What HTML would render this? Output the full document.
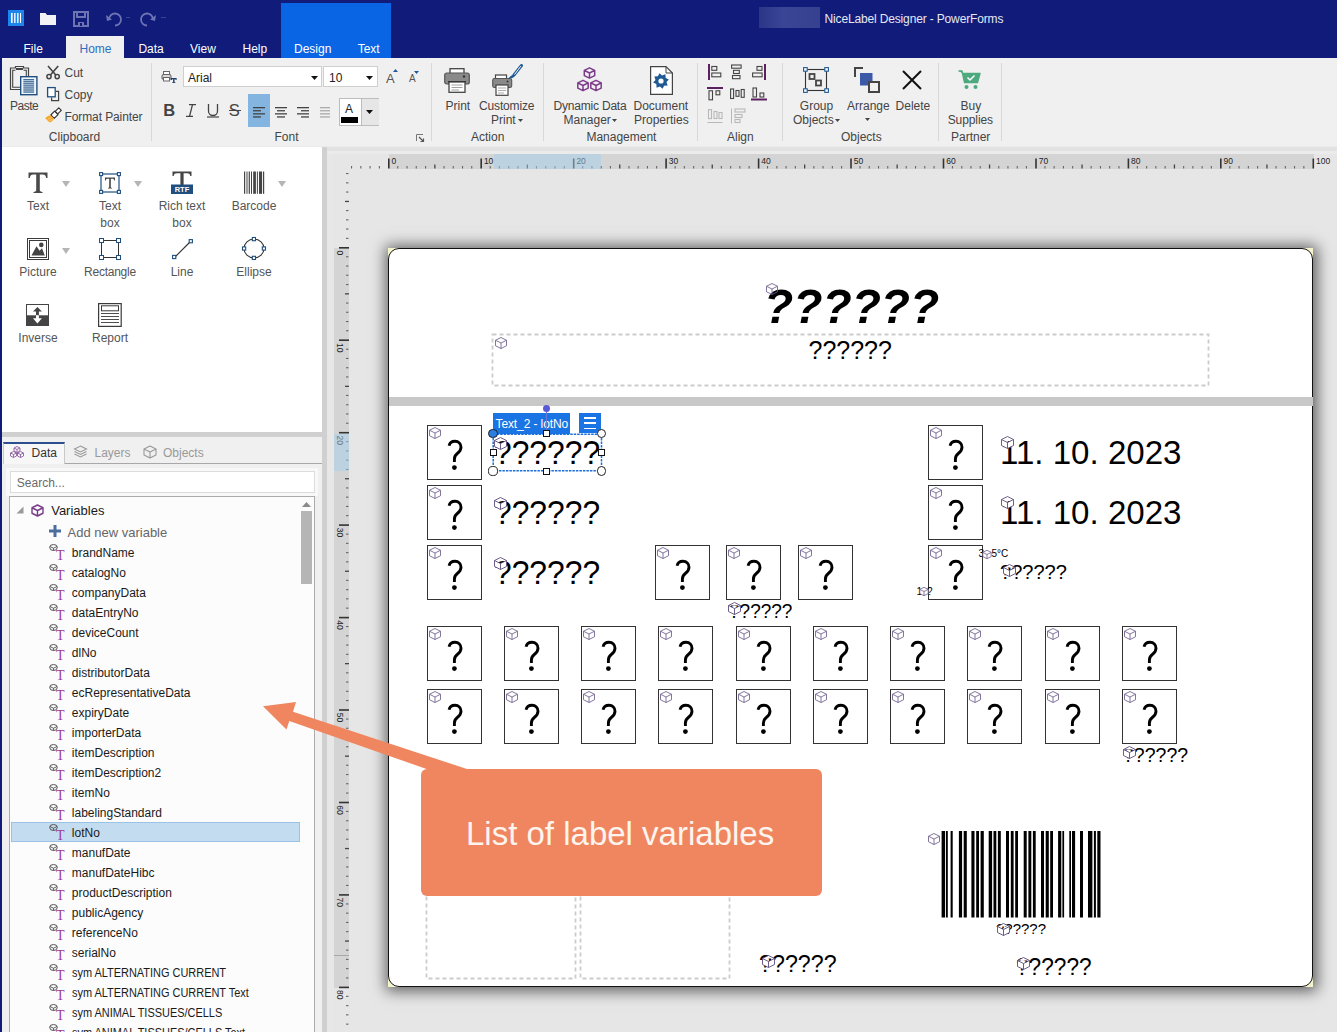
<!DOCTYPE html><html><head><meta charset="utf-8"><style>
html,body{margin:0;padding:0;width:1337px;height:1032px;overflow:hidden;background:#e6e6e6;font-family:"Liberation Sans",sans-serif;}
#root{position:relative;width:1337px;height:1032px;overflow:hidden;}
.t{position:absolute;white-space:nowrap;line-height:1;}
svg{overflow:visible}
</style></head><body><div id="root">
<div style="position:absolute;left:0px;top:0px;width:1337px;height:58px;background:#101b7a"></div>
<div style="position:absolute;left:281px;top:3px;width:110px;height:55px;background:#0a65e4"></div>
<svg style="position:absolute;left:8px;top:10px;" width="16" height="16" viewBox="0 0 16 16"><rect width="16" height="16" fill="#1c86ec"/><rect x="3" y="3" width="1.6" height="10" fill="#fff"/><rect x="6" y="3" width="1.6" height="10" fill="#dfeaff"/><rect x="9" y="3" width="1.6" height="10" fill="#dfeaff"/><rect x="12" y="3" width="1" height="10" fill="#fff"/></svg>
<svg style="position:absolute;left:40px;top:13px;" width="16" height="12" viewBox="0 0 16 12"><path d="M0 0 H5.5 L7 2 H16 V12 H0 Z" fill="#f2f2f6"/></svg>
<svg style="position:absolute;left:73px;top:11px;" width="16" height="16" viewBox="0 0 16 16"><path d="M1 1 H15 V15 H1 Z" fill="none" stroke="#6d74b4" stroke-width="2"/><rect x="4" y="1" width="8" height="5" fill="none" stroke="#6d74b4" stroke-width="2"/><rect x="5" y="11" width="6" height="4" fill="#6d74b4"/><rect x="7" y="12" width="2" height="3" fill="#101b7a"/></svg>
<svg style="position:absolute;left:106px;top:13px;" width="16" height="13" viewBox="0 0 16 13"><path d="M3 6 A6 6 0 1 1 9 12.5" fill="none" stroke="#6d74b4" stroke-width="1.8"/><path d="M0 2 L1 8 L6 6.5 Z" fill="#6d74b4"/></svg>
<div style="position:absolute;left:126px;top:17px;width:4px;height:1px;background:#3a4390"></div>
<svg style="position:absolute;left:140px;top:13px;" width="16" height="13" viewBox="0 0 16 13"><path d="M13 6 A6 6 0 1 0 7 12.5" fill="none" stroke="#6d74b4" stroke-width="1.8"/><path d="M16 2 L15 8 L10 6.5 Z" fill="#6d74b4"/></svg>
<div style="position:absolute;left:161px;top:17px;width:5px;height:1px;background:#3a4390"></div>
<div style="position:absolute;left:759px;top:7px;width:61px;height:21px;background:linear-gradient(90deg,#2b3688,#3a4596 40%,#36418f);"></div>
<div class="t" style="left:824.5px;top:13.1px;font-size:12px;color:#e6e8f4;letter-spacing:-0.15px">NiceLabel Designer - PowerForms</div>
<div style="position:absolute;left:66px;top:36px;width:58px;height:22px;background:#f0f0f0"></div>
<div class="t" style="left:23.5px;top:43.2px;font-size:12px;color:#ffffff;">File</div>
<div class="t" style="left:79.5px;top:43.2px;font-size:12px;color:#2f6fbd;">Home</div>
<div class="t" style="left:138.4px;top:43.2px;font-size:12px;color:#ffffff;">Data</div>
<div class="t" style="left:190.0px;top:43.2px;font-size:12px;color:#ffffff;">View</div>
<div class="t" style="left:242.5px;top:43.2px;font-size:12px;color:#ffffff;">Help</div>
<div class="t" style="left:294.0px;top:43.2px;font-size:12px;color:#ffffff;">Design</div>
<div class="t" style="left:357.7px;top:43.2px;font-size:12px;color:#ffffff;">Text</div>
<div style="position:absolute;left:0px;top:58px;width:1337px;height:89px;background:#f0f0f0"></div>
<div style="position:absolute;left:0px;top:146px;width:1337px;height:1px;background:#ebebeb"></div>
<div style="position:absolute;left:0px;top:58px;width:2px;height:974px;background:#101b7a"></div>
<div style="position:absolute;left:151px;top:63px;width:1px;height:78px;background:#d8d8d8"></div>
<div style="position:absolute;left:431px;top:63px;width:1px;height:78px;background:#d8d8d8"></div>
<div style="position:absolute;left:543px;top:63px;width:1px;height:78px;background:#d8d8d8"></div>
<div style="position:absolute;left:697px;top:63px;width:1px;height:78px;background:#d8d8d8"></div>
<div style="position:absolute;left:782px;top:63px;width:1px;height:78px;background:#d8d8d8"></div>
<div style="position:absolute;left:938px;top:63px;width:1px;height:78px;background:#d8d8d8"></div>
<div style="position:absolute;left:1001px;top:63px;width:1px;height:78px;background:#d8d8d8"></div>
<svg style="position:absolute;left:9px;top:65px;" width="29" height="31" viewBox="0 0 29 31"><path d="M11 24.5 H1.5 V3 H6.5 V1.5 H14.5 V3 H19.5 V11" stroke="#444" stroke-width="1.2" fill="none"/>
<path d="M11 22.3 H3.7 V5.2 H6.5 M14.5 5.2 H17.3 V11" stroke="#444" stroke-width="1.1" fill="none"/>
<rect x="7" y="3" width="7" height="2" fill="#444"/>
<rect x="11.7" y="11.7" width="16.2" height="18" fill="#eef5fb" stroke="#1f4f80" stroke-width="1.4"/><rect x="14.3" y="14.20" width="10.8" height="1.1" fill="#1f4f80"/><rect x="14.3" y="16.25" width="10.8" height="1.1" fill="#1f4f80"/><rect x="14.3" y="18.30" width="10.8" height="1.1" fill="#1f4f80"/><rect x="14.3" y="20.35" width="10.8" height="1.1" fill="#1f4f80"/><rect x="14.3" y="22.40" width="10.8" height="1.1" fill="#1f4f80"/><rect x="14.3" y="24.45" width="10.8" height="1.1" fill="#1f4f80"/><rect x="14.3" y="26.50" width="10.8" height="1.1" fill="#1f4f80"/></svg>
<div class="t" style="left:10.0px;top:99.8px;font-size:12px;color:#444;letter-spacing:-0.5px">Paste</div>
<svg style="position:absolute;left:46px;top:65px;" width="14" height="15" viewBox="0 0 14 15"><path d="M2 1 L9.8 10 M12.2 1 L4.4 10" stroke="#444" stroke-width="1.6"/><circle cx="3" cy="11.6" r="2.1" fill="none" stroke="#444" stroke-width="1.5"/><circle cx="11.2" cy="11.6" r="2.1" fill="none" stroke="#444" stroke-width="1.5"/></svg>
<div class="t" style="left:64.5px;top:66.8px;font-size:12px;color:#444;">Cut</div>
<svg style="position:absolute;left:46px;top:86px;" width="14" height="16" viewBox="0 0 14 16"><rect x="1.6" y="1.6" width="7.6" height="9.2" fill="#fff" stroke="#1f4f80" stroke-width="1.3"/><path d="M10 5.4 H12.6 V14.6 H5.6 V11.5" fill="none" stroke="#444" stroke-width="1.2"/></svg>
<div class="t" style="left:64.5px;top:89.3px;font-size:12px;color:#444;">Copy</div>
<svg style="position:absolute;left:45px;top:107px;" width="17" height="16" viewBox="0 0 17 16"><path d="M13.8 0.8 L16.3 3.3 L12.7 6.9 L10.2 4.4 Z" fill="#fff" stroke="#333" stroke-width="1.2" stroke-linejoin="round"/><path d="M9.6 4.2 L13 7.6 L9.2 11.4 L5.8 8 Z" fill="#fff" stroke="#333" stroke-width="1.2" stroke-linejoin="round"/><path d="M5.6 8.2 L9 11.6 C8 13.8 6.6 15 4.6 15.6 L0.4 11.4 C1 9.8 3 8.6 5.6 8.2 Z" fill="#f5a52a"/><path d="M2.6 12.2 L6.5 10.6 M3.8 14.2 L7.6 12" stroke="#ffd79a" stroke-width="0.7"/></svg>
<div class="t" style="left:64.5px;top:111.0px;font-size:12px;color:#444;letter-spacing:-0.1px">Format Painter</div>
<div class="t" style="left:48.8px;top:130.8px;font-size:12px;color:#444;">Clipboard</div>
<svg style="position:absolute;left:161px;top:70px;" width="17" height="14" viewBox="0 0 17 14"><rect x="2.5" y="1.5" width="6" height="4" fill="#fff" stroke="#666" stroke-width="1"/><rect x="1" y="4.5" width="9" height="5" rx="1.8" fill="#d8d8d8" stroke="#666" stroke-width="1.1"/><rect x="2.5" y="7.5" width="6" height="3.5" fill="#fff" stroke="#666" stroke-width="1"/><path d="M10 8 H15.6 V10 H14.7 L14.5 9.3 H13.5 V12.2 H14.4 V13 H11.2 V12.2 H12.1 V9.3 H11.1 L10.9 10 H10 Z" fill="#1f3f6f"/></svg>
<div style="position:absolute;left:183px;top:66px;width:139px;height:21px;background:#fff;box-sizing:border-box;border:1px solid #cfcfcf"></div>
<div class="t" style="left:188.0px;top:71.8px;font-size:12px;color:#222;">Arial</div>
<svg style="position:absolute;left:311px;top:76px;" width="7" height="4" viewBox="0 0 7 4"><path d="M0 0 H7 L3.5 4 Z" fill="#111"/></svg>
<div style="position:absolute;left:323px;top:66px;width:55px;height:21px;background:#fff;box-sizing:border-box;border:1px solid #cfcfcf"></div>
<div class="t" style="left:329.0px;top:71.8px;font-size:12px;color:#222;">10</div>
<svg style="position:absolute;left:366px;top:76px;" width="7" height="4" viewBox="0 0 7 4"><path d="M0 0 H7 L3.5 4 Z" fill="#111"/></svg>
<div class="t" style="left:386.0px;top:71.5px;font-size:13px;color:#555;">A</div>
<svg style="position:absolute;left:393px;top:69px;" width="5" height="3" viewBox="0 0 5 3"><path d="M0 3 L2.5 0 L5 3 Z" fill="#1f5aa0"/></svg>
<div class="t" style="left:409.0px;top:73.5px;font-size:10px;color:#555;">A</div>
<svg style="position:absolute;left:414px;top:70.5px;" width="5" height="3" viewBox="0 0 5 3"><path d="M0 0 L2.5 3 L5 0 Z" fill="#1f5aa0"/></svg>
<div class="t" style="left:163.2px;top:102.3px;font-size:16.5px;color:#444;font-weight:bold">B</div>
<svg style="position:absolute;left:186px;top:104px;" width="10" height="13" viewBox="0 0 10 13"><path d="M3 0.7 H10 M0 12.3 H7 M6.5 0.7 L3.5 12.3" stroke="#444" stroke-width="1.3" fill="none"/></svg>
<svg style="position:absolute;left:207px;top:104px;" width="12" height="14" viewBox="0 0 12 14"><path d="M1.5 0 V7 A4.5 4.5 0 0 0 10.5 7 V0" stroke="#444" stroke-width="1.3" fill="none"/><path d="M0 13 H12" stroke="#444" stroke-width="1.2"/></svg>
<div class="t" style="left:228.8px;top:102.3px;font-size:16.5px;color:#444;">S</div>
<div style="position:absolute;left:228.5px;top:109.5px;width:12px;height:1.2px;background:#444"></div>
<div style="position:absolute;left:248px;top:94px;width:22px;height:33px;background:#84b4e0"></div>
<svg style="position:absolute;left:253px;top:107px;" width="12" height="10" viewBox="0 0 12 10"><rect x="0" y="0.0" width="12" height="1.3" fill="#444"/><rect x="0" y="3.1" width="8" height="1.3" fill="#444"/><rect x="0" y="6.2" width="12" height="1.3" fill="#444"/><rect x="0" y="9.3" width="8" height="1.3" fill="#444"/></svg>
<svg style="position:absolute;left:275px;top:107px;" width="12" height="10" viewBox="0 0 12 10"><rect x="0" y="0.0" width="12" height="1.3" fill="#444"/><rect x="2" y="3.1" width="8" height="1.3" fill="#444"/><rect x="0" y="6.2" width="12" height="1.3" fill="#444"/><rect x="2" y="9.3" width="8" height="1.3" fill="#444"/></svg>
<svg style="position:absolute;left:297px;top:107px;" width="12" height="10" viewBox="0 0 12 10"><rect x="0" y="0.0" width="12" height="1.3" fill="#444"/><rect x="4" y="3.1" width="8" height="1.3" fill="#444"/><rect x="0" y="6.2" width="12" height="1.3" fill="#444"/><rect x="4" y="9.3" width="8" height="1.3" fill="#444"/></svg>
<svg style="position:absolute;left:320px;top:107px;" width="12" height="10" viewBox="0 0 12 10"><rect x="0" y="0.0" width="10" height="1.3" fill="#aaa"/><rect x="0" y="3.1" width="10" height="1.3" fill="#aaa"/><rect x="0" y="6.2" width="10" height="1.3" fill="#aaa"/><rect x="0" y="9.3" width="10" height="1.3" fill="#aaa"/></svg>
<div style="position:absolute;left:339px;top:98px;width:40px;height:28px;background:#fff;box-sizing:border-box;border:1px solid #bdbdbd"></div>
<div style="position:absolute;left:361px;top:99px;width:17px;height:26px;background:#e6e6e6;border-left:1px solid #bdbdbd"></div>
<div class="t" style="left:345.0px;top:102.8px;font-size:12px;color:#222;">A</div>
<div style="position:absolute;left:341px;top:117px;width:17px;height:6px;background:#000"></div>
<svg style="position:absolute;left:366px;top:110px;" width="7" height="4" viewBox="0 0 7 4"><path d="M0 0 H7 L3.5 4 Z" fill="#111"/></svg>
<div class="t" style="left:274.5px;top:130.8px;font-size:12px;color:#444;">Font</div>
<svg style="position:absolute;left:416px;top:134px;" width="8" height="8" viewBox="0 0 8 8"><path d="M0.5 7 V0.5 H7" fill="none" stroke="#777" stroke-width="1"/><path d="M3 3 L7.5 7.5 M4.5 7.5 H7.5 V4.5" fill="none" stroke="#555" stroke-width="1.2"/></svg>
<svg style="position:absolute;left:444px;top:68px;" width="26" height="25" viewBox="0 0 26 25"><rect x="6" y="0.7" width="14" height="5" fill="#fff" stroke="#444" stroke-width="1.3"/>
<rect x="0.7" y="5" width="24.6" height="11" rx="2" fill="#8a8a8a" stroke="#555" stroke-width="1.2"/>
<circle cx="20" cy="8.5" r="1.2" fill="#333"/><rect x="4" y="13" width="18" height="1.3" fill="#222"/>
<rect x="5" y="14" width="16" height="10.3" fill="#fff" stroke="#444" stroke-width="1.3"/>
<path d="M7.5 17 H18.5 M7.5 19.5 H18.5 M7.5 22 H15" stroke="#888" stroke-width="0.8"/></svg>
<div class="t" style="left:445.5px;top:99.8px;font-size:12px;color:#444;">Print</div>
<svg style="position:absolute;left:492px;top:64px;" width="31" height="32" viewBox="0 0 31 32"><rect x="3.5" y="11" width="11" height="4" fill="#fff" stroke="#444" stroke-width="1.2"/>
<rect x="0.7" y="14.5" width="19" height="9" rx="1.8" fill="#8a8a8a" stroke="#555" stroke-width="1.1"/>
<circle cx="15.5" cy="17.5" r="1" fill="#333"/>
<rect x="4" y="21" width="12" height="10.3" fill="#fff" stroke="#444" stroke-width="1.2"/>
<path d="M6 24 H14 M6 26.5 H14 M6 29 H12" stroke="#888" stroke-width="0.7"/>
<path d="M29.5 1.5 L22 11" stroke="#1f5a96" stroke-width="3" stroke-linecap="round" fill="none"/><path d="M28.8 2.2 L22.5 10.5" stroke="#fff" stroke-width="1" />
<path d="M21.5 10.5 C19 11 18 13 16 14.5 C19.5 15 22.5 13.5 22.5 11.5 Z" fill="#1f5a96"/></svg>
<div class="t" style="left:479.0px;top:99.8px;font-size:12px;color:#444;letter-spacing:-0.15px">Customize</div>
<div class="t" style="left:491.0px;top:113.8px;font-size:12px;color:#444;">Print</div>
<svg style="position:absolute;left:518px;top:119px;" width="5" height="3" viewBox="0 0 5 3"><path d="M0 0 H5 L2.5 3 Z" fill="#444"/></svg>
<div class="t" style="left:471.0px;top:130.8px;font-size:12px;color:#444;">Action</div>
<svg style="position:absolute;left:576px;top:67px;" width="27" height="27" viewBox="0 0 27 27"><path d="M13.5 0.7999999999999998 L18.7 3.4 V8.6 L13.5 11.2 L8.3 8.6 V3.4 Z M8.3 3.4 L13.5 6 L18.7 3.4 M13.5 6 V11.2" fill="none" stroke="#7d3a8a" stroke-width="1.5" stroke-linejoin="round"/><path d="M7 13.3 L12.2 15.9 V21.1 L7 23.7 L1.7999999999999998 21.1 V15.9 Z M1.7999999999999998 15.9 L7 18.5 L12.2 15.9 M7 18.5 V23.7" fill="none" stroke="#7d3a8a" stroke-width="1.5" stroke-linejoin="round"/><path d="M20 13.3 L25.2 15.9 V21.1 L20 23.7 L14.8 21.1 V15.9 Z M14.8 15.9 L20 18.5 L25.2 15.9 M20 18.5 V23.7" fill="none" stroke="#7d3a8a" stroke-width="1.5" stroke-linejoin="round"/></svg>
<div class="t" style="left:553.5px;top:99.8px;font-size:12px;color:#444;letter-spacing:-0.2px">Dynamic Data</div>
<div class="t" style="left:563.5px;top:113.8px;font-size:12px;color:#444;">Manager</div>
<svg style="position:absolute;left:612px;top:119px;" width="5" height="3" viewBox="0 0 5 3"><path d="M0 0 H5 L2.5 3 Z" fill="#444"/></svg>
<svg style="position:absolute;left:650px;top:66px;" width="23" height="29" viewBox="0 0 23 29"><path d="M0.6 0.6 H16 L22.4 7 V28.4 H0.6 Z" fill="#fff" stroke="#444" stroke-width="1.2"/><path d="M16 0.6 V7 H22.4" fill="none" stroke="#444" stroke-width="1"/>
<polygon points="18.85,13.44 16.49,16.09 17.65,19.44 14.11,19.66 12.56,22.85 9.91,20.49 6.56,21.65 6.34,18.11 3.15,16.56 5.51,13.91 4.35,10.56 7.89,10.34 9.44,7.15 12.09,9.51 15.44,8.35 15.66,11.89" fill="#1f5a96"/><circle cx="11" cy="15" r="2.6" fill="#fff"/></svg>
<div class="t" style="left:633.5px;top:99.8px;font-size:12px;color:#444;">Document</div>
<div class="t" style="left:634.0px;top:113.8px;font-size:12px;color:#444;">Properties</div>
<div class="t" style="left:586.4px;top:130.8px;font-size:12px;color:#444;">Management</div>
<svg style="position:absolute;left:708px;top:64px;" width="16" height="16" viewBox="0 0 16 16"><rect x="0" y="0" width="2" height="16" fill="#5a2060"/><rect x="3.8" y="2.5" width="5" height="3.8" fill="none" stroke="#444" stroke-width="1.1"/><rect x="3.8" y="9" width="9" height="3.8" fill="none" stroke="#444" stroke-width="1.1"/></svg>
<svg style="position:absolute;left:731px;top:64px;" width="16" height="16" viewBox="0 0 16 16"><rect x="0.6" y="1" width="9.5" height="3.2" fill="none" stroke="#444" stroke-width="1.1"/><rect x="2.5" y="6.3" width="5.8" height="3.2" fill="none" stroke="#444" stroke-width="1.1"/><rect x="1.5" y="11.5" width="7.5" height="3.2" fill="none" stroke="#444" stroke-width="1.1"/></svg>
<svg style="position:absolute;left:752px;top:64px;" width="16" height="16" viewBox="0 0 16 16"><rect x="12" y="0" width="2" height="16" fill="#5a2060"/><rect x="5" y="2.5" width="5" height="3.8" fill="none" stroke="#444" stroke-width="1.1"/><rect x="0.6" y="9" width="9.5" height="3.8" fill="none" stroke="#444" stroke-width="1.1"/></svg>
<svg style="position:absolute;left:707px;top:87px;" width="16" height="16" viewBox="0 0 16 16"><rect x="0" y="0" width="16" height="2" fill="#5a2060"/><rect x="2" y="3.8" width="3.5" height="9" fill="none" stroke="#444" stroke-width="1.1"/><rect x="9" y="3.8" width="3.8" height="4" fill="none" stroke="#444" stroke-width="1.1"/></svg>
<svg style="position:absolute;left:730px;top:88px;" width="16" height="16" viewBox="0 0 16 16"><rect x="0.6" y="1" width="3" height="9.5" fill="none" stroke="#444" stroke-width="1.1"/><rect x="6" y="2.5" width="3" height="5.8" fill="none" stroke="#444" stroke-width="1.1"/><rect x="11.2" y="1.5" width="3" height="7.8" fill="none" stroke="#444" stroke-width="1.1"/></svg>
<svg style="position:absolute;left:751px;top:87px;" width="16" height="16" viewBox="0 0 16 16"><rect x="2" y="1" width="3.5" height="9" fill="none" stroke="#444" stroke-width="1.1"/><rect x="9" y="6" width="3.8" height="4" fill="none" stroke="#444" stroke-width="1.1"/><rect x="0" y="11.5" width="16" height="2" fill="#5a2060"/></svg>
<svg style="position:absolute;left:707px;top:109px;" width="16" height="16" viewBox="0 0 16 16"><rect x="1.5" y="0.6" width="3" height="9" fill="none" stroke="#b8b8b8" stroke-width="1.1"/><rect x="7" y="2.5" width="3" height="7" fill="none" stroke="#b8b8b8" stroke-width="1.1"/><rect x="12" y="3.5" width="3" height="6" fill="none" stroke="#b8b8b8" stroke-width="1.1"/><path d="M0.5 13.5 H15.5" stroke="#b8b8b8" stroke-width="1"/></svg>
<svg style="position:absolute;left:730px;top:108px;" width="16" height="16" viewBox="0 0 16 16"><path d="M1.5 0.5 V15.5" stroke="#b8b8b8" stroke-width="1"/><rect x="5" y="1" width="10" height="3" fill="none" stroke="#b8b8b8" stroke-width="1.1"/><rect x="5" y="6.5" width="7" height="3" fill="none" stroke="#b8b8b8" stroke-width="1.1"/><rect x="5" y="11.5" width="5" height="3" fill="none" stroke="#b8b8b8" stroke-width="1.1"/></svg>
<div class="t" style="left:727.0px;top:130.8px;font-size:12px;color:#444;">Align</div>
<svg style="position:absolute;left:803px;top:67px;" width="26" height="26" viewBox="0 0 26 26"><rect x="2.5" y="2.5" width="21" height="21" fill="none" stroke="#333" stroke-width="1.1"/>
<rect x="6.5" y="7" width="5" height="5" fill="none" stroke="#444" stroke-width="1.8"/><rect x="13" y="13.5" width="5" height="5" fill="none" stroke="#444" stroke-width="1.8"/>
<rect x="0.6" y="0.6" width="3.6" height="3.6" fill="#fff" stroke="#1f5a96" stroke-width="1.1"/><rect x="21.8" y="0.6" width="3.6" height="3.6" fill="#fff" stroke="#1f5a96" stroke-width="1.1"/>
<rect x="0.6" y="21.8" width="3.6" height="3.6" fill="#fff" stroke="#1f5a96" stroke-width="1.1"/><rect x="21.8" y="21.8" width="3.6" height="3.6" fill="#fff" stroke="#1f5a96" stroke-width="1.1"/></svg>
<div class="t" style="left:799.8px;top:99.8px;font-size:12px;color:#444;">Group</div>
<div class="t" style="left:793.0px;top:113.8px;font-size:12px;color:#444;">Objects</div>
<svg style="position:absolute;left:835px;top:119px;" width="5" height="3" viewBox="0 0 5 3"><path d="M0 0 H5 L2.5 3 Z" fill="#444"/></svg>
<svg style="position:absolute;left:854px;top:67px;" width="26" height="26" viewBox="0 0 26 26"><path d="M1 10 V1 H9" fill="none" stroke="#444" stroke-width="2"/>
<rect x="6" y="6" width="12.5" height="12.5" fill="#3a5aa8"/>
<rect x="15" y="15" width="10" height="10" fill="#f0f0f0" stroke="#444" stroke-width="2"/></svg>
<div class="t" style="left:847.0px;top:99.8px;font-size:12px;color:#444;">Arrange</div>
<svg style="position:absolute;left:865px;top:118px;" width="5" height="3" viewBox="0 0 5 3"><path d="M0 0 H5 L2.5 3 Z" fill="#444"/></svg>
<svg style="position:absolute;left:902px;top:69.5px;" width="20" height="20" viewBox="0 0 20 20"><path d="M1 1 L19 19 M19 1 L1 19" stroke="#111" stroke-width="2"/></svg>
<div class="t" style="left:895.6px;top:99.8px;font-size:12px;color:#444;">Delete</div>
<div class="t" style="left:841.0px;top:130.8px;font-size:12px;color:#444;">Objects</div>
<svg style="position:absolute;left:958px;top:70px;" width="23" height="20" viewBox="0 0 23 20"><path d="M0.5 1 H4 L6.5 12.5 H19.5 L22 3.5 H5" fill="#4eaa7e" stroke="#4eaa7e" stroke-width="1.4" stroke-linejoin="round"/>
<path d="M9.5 7.5 L12 10 L16.5 5.5" fill="none" stroke="#fff" stroke-width="1.5"/>
<circle cx="8.5" cy="17" r="2" fill="#4eaa7e"/><circle cx="17.5" cy="17" r="2" fill="#4eaa7e"/></svg>
<div class="t" style="left:960.6px;top:99.8px;font-size:12px;color:#444;">Buy</div>
<div class="t" style="left:947.7px;top:113.8px;font-size:12px;color:#444;letter-spacing:-0.1px">Supplies</div>
<div class="t" style="left:951.0px;top:130.8px;font-size:12px;color:#444;">Partner</div>
<div style="position:absolute;left:2px;top:147px;width:320px;height:285px;background:#ffffff"></div>
<div style="position:absolute;left:322px;top:147px;width:5px;height:885px;background:#d0d0d0"></div>
<svg style="position:absolute;left:28px;top:172px;" width="20" height="21" viewBox="0 0 20 21"><path d="M0.5 0.5 H19.5 V6 H18.2 C17.8 3.5 17 2.5 14.5 2.5 H11.8 V18 C11.8 19.3 12.5 19.7 14.5 19.9 V21 H5.5 V19.9 C7.5 19.7 8.2 19.3 8.2 18 V2.5 H5.5 C3 2.5 2.2 3.5 1.8 6 H0.5 Z" fill="#4a4a4a"/></svg>
<svg style="position:absolute;left:62px;top:181px;" width="8" height="6" viewBox="0 0 8 6"><path d="M0 0 H8 L4 6 Z" fill="#b5b5b5"/></svg>
<div class="t" style="left:-112.0px;width:300px;text-align:center;top:200.2px;font-size:12px;color:#555;">Text</div>
<svg style="position:absolute;left:99px;top:172px;" width="22" height="22" viewBox="0 0 22 22"><rect x="2" y="2" width="18" height="18" fill="none" stroke="#1f4f7f" stroke-width="1.2"/>
<rect x="0.6" y="0.6" width="3" height="3" fill="#fff" stroke="#1f4f7f" stroke-width="1.1"/><rect x="18.4" y="0.6" width="3" height="3" fill="#fff" stroke="#1f4f7f" stroke-width="1.1"/>
<rect x="0.6" y="18.4" width="3" height="3" fill="#fff" stroke="#1f4f7f" stroke-width="1.1"/><rect x="18.4" y="18.4" width="3" height="3" fill="#fff" stroke="#1f4f7f" stroke-width="1.1"/>
<path d="M6 5.5 H16 V8.5 H15.3 C15 7 14.5 6.7 13 6.7 H11.8 V15 C11.8 15.6 12.2 15.8 13 15.9 V16.5 H9 V15.9 C9.8 15.8 10.2 15.6 10.2 15 V6.7 H9 C7.5 6.7 7 7 6.7 8.5 H6 Z" fill="#444"/></svg>
<svg style="position:absolute;left:134px;top:181px;" width="8" height="6" viewBox="0 0 8 6"><path d="M0 0 H8 L4 6 Z" fill="#b5b5b5"/></svg>
<div class="t" style="left:-40.0px;width:300px;text-align:center;top:200.2px;font-size:12px;color:#555;">Text</div>
<div class="t" style="left:-40.0px;width:300px;text-align:center;top:217.0px;font-size:12px;color:#555;">box</div>
<svg style="position:absolute;left:171px;top:171px;" width="22" height="23" viewBox="0 0 22 23"><path d="M1.5 0.5 H20.5 V5 H19.3 C19 3 18 2.3 16 2.3 H12.6 V14 H9.4 V2.3 H6 C4 2.3 3 3 2.7 5 H1.5 Z" fill="#444"/>
<rect x="0" y="13.5" width="22" height="9.5" fill="#1f4f7f"/>
<text x="11" y="21.3" text-anchor="middle" font-family="Liberation Sans" font-weight="bold" font-size="7.5" fill="#fff">RTF</text></svg>
<div class="t" style="left:32.0px;width:300px;text-align:center;top:200.2px;font-size:12px;color:#555;">Rich text</div>
<div class="t" style="left:32.0px;width:300px;text-align:center;top:217.0px;font-size:12px;color:#555;">box</div>
<svg style="position:absolute;left:0;top:0" width="1337" height="1032"><rect x="244.0" y="171.5" width="1.2" height="22.3" fill="#444"/><rect x="246.5" y="171.5" width="1" height="22.3" fill="#444"/><rect x="248.7" y="171.5" width="1.2" height="22.3" fill="#444"/><rect x="251.0" y="171.5" width="1" height="22.3" fill="#444"/><rect x="253.2" y="171.5" width="2.7" height="22.3" fill="#444"/><rect x="256.9" y="171.5" width="1" height="22.3" fill="#444"/><rect x="259.0" y="171.5" width="3" height="22.3" fill="#444"/><rect x="262.9" y="171.5" width="1.3" height="22.3" fill="#444"/></svg>
<svg style="position:absolute;left:278px;top:181px;" width="8" height="6" viewBox="0 0 8 6"><path d="M0 0 H8 L4 6 Z" fill="#b5b5b5"/></svg>
<div class="t" style="left:104.0px;width:300px;text-align:center;top:200.2px;font-size:12px;color:#555;">Barcode</div>
<svg style="position:absolute;left:26px;top:238px;" width="24" height="23" viewBox="0 0 24 23"><rect x="1.5" y="0.5" width="21" height="21" fill="#fff" stroke="#3a3a3a" stroke-width="1"/>
<rect x="3.5" y="2.5" width="17" height="17" fill="none" stroke="#3a3a3a" stroke-width="1"/>
<path d="M5.5 17.5 L10.5 8.2 L13.6 12.8 L16 10.2 L18.8 17.5 Z" fill="#444"/><circle cx="15.3" cy="6.9" r="3.2" fill="#fff"/><circle cx="15.3" cy="6.9" r="2.3" fill="#444"/></svg>
<svg style="position:absolute;left:62px;top:247.5px;" width="8" height="6" viewBox="0 0 8 6"><path d="M0 0 H8 L4 6 Z" fill="#b5b5b5"/></svg>
<div class="t" style="left:-112.0px;width:300px;text-align:center;top:265.9px;font-size:12px;color:#555;">Picture</div>
<svg style="position:absolute;left:99px;top:238px;" width="23" height="23" viewBox="0 0 23 23"><rect x="2.5" y="2.5" width="17" height="17" fill="none" stroke="#333" stroke-width="1"/>
<rect x="0.5" y="0.5" width="4" height="4" fill="#fff" stroke="#1f4f7f" stroke-width="1"/><rect x="17.5" y="0.5" width="4" height="4" fill="#fff" stroke="#1f4f7f" stroke-width="1"/>
<rect x="0.5" y="17.5" width="4" height="4" fill="#fff" stroke="#1f4f7f" stroke-width="1"/><rect x="17.5" y="17.5" width="4" height="4" fill="#fff" stroke="#1f4f7f" stroke-width="1"/></svg>
<div class="t" style="left:-40.0px;width:300px;text-align:center;top:265.9px;font-size:12px;color:#555;letter-spacing:-0.25px">Rectangle</div>
<svg style="position:absolute;left:171.5px;top:238.5px;" width="21" height="21" viewBox="0 0 21 21"><path d="M3 18 L18 3" stroke="#333" stroke-width="1.1"/>
<rect x="0.6" y="16.4" width="3.2" height="3.2" fill="#fff" stroke="#1f4f7f" stroke-width="1.1"/><rect x="17.2" y="0.6" width="3.2" height="3.2" fill="#fff" stroke="#1f4f7f" stroke-width="1.1"/></svg>
<div class="t" style="left:32.0px;width:300px;text-align:center;top:265.9px;font-size:12px;color:#555;">Line</div>
<svg style="position:absolute;left:242px;top:237px;" width="24" height="23" viewBox="0 0 24 23"><ellipse cx="12" cy="11.5" rx="10" ry="9.5" fill="none" stroke="#333" stroke-width="1.1"/>
<rect x="10.3" y="0.5" width="3.2" height="3.2" fill="#fff" stroke="#1f4f7f" stroke-width="1.1"/><rect x="10.3" y="19.3" width="3.2" height="3.2" fill="#fff" stroke="#1f4f7f" stroke-width="1.1"/>
<rect x="0.5" y="9.9" width="3.2" height="3.2" fill="#fff" stroke="#1f4f7f" stroke-width="1.1"/><rect x="20.3" y="9.9" width="3.2" height="3.2" fill="#fff" stroke="#1f4f7f" stroke-width="1.1"/></svg>
<div class="t" style="left:104.0px;width:300px;text-align:center;top:265.9px;font-size:12px;color:#555;">Ellipse</div>
<svg style="position:absolute;left:26px;top:304px;" width="23" height="22" viewBox="0 0 23 22"><rect x="0.5" y="0.5" width="22" height="21" fill="#fff" stroke="#444" stroke-width="1"/>
<rect x="0" y="11.3" width="23" height="10.7" fill="#444"/>
<path d="M11.4 3 L7 7.5 H10 V11.3 H12.9 V7.5 H15.9 Z" fill="#444"/>
<path d="M11.4 19.6 L7 14.2 H10 V11.3 H12.9 V14.2 H15.9 Z" fill="#fff"/></svg>
<div class="t" style="left:-112.0px;width:300px;text-align:center;top:331.9px;font-size:12px;color:#555;">Inverse</div>
<svg style="position:absolute;left:98px;top:303px;" width="24" height="24" viewBox="0 0 24 24"><rect x="0.6" y="0.6" width="22.6" height="22.8" fill="#fff" stroke="#3a3a3a" stroke-width="1.2"/>
<rect x="3.5" y="2.8" width="17" height="5" fill="none" stroke="#3a3a3a" stroke-width="1"/>
<path d="M3 10.5 H21 M3 13.5 H21 M3 16.5 H21 M3 19.5 H21" stroke="#3a3a3a" stroke-width="0.9"/></svg>
<div class="t" style="left:-40.0px;width:300px;text-align:center;top:331.9px;font-size:12px;color:#555;">Report</div>
<div style="position:absolute;left:2px;top:432px;width:320px;height:5px;background:#d0d0d0"></div>
<div style="position:absolute;left:2px;top:437px;width:320px;height:595px;background:#f0f0f0"></div>
<div style="position:absolute;left:3px;top:442px;width:62px;height:22px;background:#f7f7f7;box-sizing:border-box;border-left:1px solid #c8c8c8;border-right:1px solid #c8c8c8;border-top:2px solid #2d4f8f"></div>
<div style="position:absolute;left:65px;top:463px;width:257px;height:1px;background:#a8a8a8"></div>
<svg style="position:absolute;left:10px;top:446px;" width="14" height="12" viewBox="0 0 14 12"><path d="M7 0.5 L10 2.0 V5.0 L7 6.5 L4 5.0 V2.0 Z M4 2.0 L7 3.5 L10 2.0 M7 3.5 V6.5" fill="none" stroke="#9060a0" stroke-width="0.9" stroke-linejoin="round"/><path d="M3.5 5.5 L6.5 7.0 V10.0 L3.5 11.5 L0.5 10.0 V7.0 Z M0.5 7.0 L3.5 8.5 L6.5 7.0 M3.5 8.5 V11.5" fill="none" stroke="#9060a0" stroke-width="0.9" stroke-linejoin="round"/><path d="M10.5 5.5 L13.5 7.0 V10.0 L10.5 11.5 L7.5 10.0 V7.0 Z M7.5 7.0 L10.5 8.5 L13.5 7.0 M10.5 8.5 V11.5" fill="none" stroke="#9060a0" stroke-width="0.9" stroke-linejoin="round"/></svg>
<div class="t" style="left:31.6px;top:446.8px;font-size:12px;color:#333;">Data</div>
<svg style="position:absolute;left:74px;top:445px;" width="13" height="14" viewBox="0 0 13 14"><path d="M6.5 1 L12.5 4 L6.5 7 L0.5 4 Z" fill="none" stroke="#999" stroke-width="1.1"/><path d="M0.5 6.5 L6.5 9.5 L12.5 6.5 M0.5 9 L6.5 12 L12.5 9" fill="none" stroke="#999" stroke-width="1.1"/></svg>
<div class="t" style="left:94.5px;top:446.8px;font-size:12px;color:#999;">Layers</div>
<svg style="position:absolute;left:143px;top:445px;" width="14" height="14" viewBox="0 0 14 14"><path d="M7 1 L13 4.0 V10.0 L7 13 L1 10.0 V4.0 Z M1 4.0 L7 7 L13 4.0 M7 7 V13" fill="none" stroke="#999" stroke-width="1.1" stroke-linejoin="round"/></svg>
<div class="t" style="left:163.0px;top:446.8px;font-size:12px;color:#999;">Objects</div>
<div style="position:absolute;left:6px;top:468px;width:312px;height:28px;background:#f8f8f8"></div>
<div style="position:absolute;left:10px;top:471px;width:305px;height:22px;background:#fff;box-sizing:border-box;border:1px solid #dcdcdc"></div>
<div class="t" style="left:16.8px;top:476.8px;font-size:12px;color:#6a6a6a;">Search...</div>
<div style="position:absolute;left:9px;top:496px;width:306px;height:540px;background:#fcfcfc;box-sizing:border-box;border:1px solid #acacac"></div>
<svg style="position:absolute;left:302px;top:502px;" width="9" height="5" viewBox="0 0 9 5"><path d="M0 5 L4.5 0 L9 5 Z" fill="#8a8a8a"/></svg>
<div style="position:absolute;left:301px;top:511px;width:11px;height:73px;background:#b5b5b5"></div>
<svg style="position:absolute;left:16px;top:506px;" width="8" height="8" viewBox="0 0 8 8"><path d="M7.5 0.5 V7.5 H0.5 Z" fill="#9a9a9a"/></svg>
<svg style="position:absolute;left:31px;top:504px;" width="13" height="13" viewBox="0 0 13 13"><path d="M6.5 1.0 L12.0 3.75 V9.25 L6.5 12.0 L1.0 9.25 V3.75 Z M1.0 3.75 L6.5 6.5 L12.0 3.75 M6.5 6.5 V12.0" fill="none" stroke="#7a3d8a" stroke-width="1.4" stroke-linejoin="round"/></svg>
<div class="t" style="left:51.2px;top:503.8px;font-size:13px;color:#1a1a1a;">Variables</div>
<svg style="position:absolute;left:49px;top:525px;" width="12" height="12" viewBox="0 0 12 12"><rect x="4.5" y="0" width="3" height="12" fill="#4a6f9f"/><rect x="0" y="4.5" width="12" height="3" fill="#4a6f9f"/></svg>
<div class="t" style="left:67.5px;top:525.9px;font-size:13px;color:#666;">Add new variable</div>
<svg style="position:absolute;left:49px;top:544.3px;" width="9" height="7" viewBox="0 0 9 7"><ellipse cx="4.5" cy="3.5" rx="3.8" ry="3" fill="none" stroke="#555" stroke-width="1"/><path d="M0.8 2.5 L4.5 4.2 L8.2 2.5 M4.5 4.2 V6.5" fill="none" stroke="#555" stroke-width="0.9"/></svg>
<div class="t" style="left:56px;top:548.6px;font-size:14px;font-family:'Liberation Serif',serif;color:#9a3aa0">T</div>
<div class="t" style="left:71.8px;top:546.6px;font-size:12px;color:#1a1a1a;">brandName</div>
<svg style="position:absolute;left:49px;top:564.3px;" width="9" height="7" viewBox="0 0 9 7"><ellipse cx="4.5" cy="3.5" rx="3.8" ry="3" fill="none" stroke="#555" stroke-width="1"/><path d="M0.8 2.5 L4.5 4.2 L8.2 2.5 M4.5 4.2 V6.5" fill="none" stroke="#555" stroke-width="0.9"/></svg>
<div class="t" style="left:56px;top:568.6px;font-size:14px;font-family:'Liberation Serif',serif;color:#9a3aa0">T</div>
<div class="t" style="left:71.8px;top:566.6px;font-size:12px;color:#1a1a1a;">catalogNo</div>
<svg style="position:absolute;left:49px;top:584.3px;" width="9" height="7" viewBox="0 0 9 7"><ellipse cx="4.5" cy="3.5" rx="3.8" ry="3" fill="none" stroke="#555" stroke-width="1"/><path d="M0.8 2.5 L4.5 4.2 L8.2 2.5 M4.5 4.2 V6.5" fill="none" stroke="#555" stroke-width="0.9"/></svg>
<div class="t" style="left:56px;top:588.6px;font-size:14px;font-family:'Liberation Serif',serif;color:#9a3aa0">T</div>
<div class="t" style="left:71.8px;top:586.6px;font-size:12px;color:#1a1a1a;">companyData</div>
<svg style="position:absolute;left:49px;top:604.3px;" width="9" height="7" viewBox="0 0 9 7"><ellipse cx="4.5" cy="3.5" rx="3.8" ry="3" fill="none" stroke="#555" stroke-width="1"/><path d="M0.8 2.5 L4.5 4.2 L8.2 2.5 M4.5 4.2 V6.5" fill="none" stroke="#555" stroke-width="0.9"/></svg>
<div class="t" style="left:56px;top:608.6px;font-size:14px;font-family:'Liberation Serif',serif;color:#9a3aa0">T</div>
<div class="t" style="left:71.8px;top:606.6px;font-size:12px;color:#1a1a1a;">dataEntryNo</div>
<svg style="position:absolute;left:49px;top:624.3px;" width="9" height="7" viewBox="0 0 9 7"><ellipse cx="4.5" cy="3.5" rx="3.8" ry="3" fill="none" stroke="#555" stroke-width="1"/><path d="M0.8 2.5 L4.5 4.2 L8.2 2.5 M4.5 4.2 V6.5" fill="none" stroke="#555" stroke-width="0.9"/></svg>
<div class="t" style="left:56px;top:628.6px;font-size:14px;font-family:'Liberation Serif',serif;color:#9a3aa0">T</div>
<div class="t" style="left:71.8px;top:626.6px;font-size:12px;color:#1a1a1a;">deviceCount</div>
<svg style="position:absolute;left:49px;top:644.3px;" width="9" height="7" viewBox="0 0 9 7"><ellipse cx="4.5" cy="3.5" rx="3.8" ry="3" fill="none" stroke="#555" stroke-width="1"/><path d="M0.8 2.5 L4.5 4.2 L8.2 2.5 M4.5 4.2 V6.5" fill="none" stroke="#555" stroke-width="0.9"/></svg>
<div class="t" style="left:56px;top:648.6px;font-size:14px;font-family:'Liberation Serif',serif;color:#9a3aa0">T</div>
<div class="t" style="left:71.8px;top:646.6px;font-size:12px;color:#1a1a1a;">dlNo</div>
<svg style="position:absolute;left:49px;top:664.3px;" width="9" height="7" viewBox="0 0 9 7"><ellipse cx="4.5" cy="3.5" rx="3.8" ry="3" fill="none" stroke="#555" stroke-width="1"/><path d="M0.8 2.5 L4.5 4.2 L8.2 2.5 M4.5 4.2 V6.5" fill="none" stroke="#555" stroke-width="0.9"/></svg>
<div class="t" style="left:56px;top:668.6px;font-size:14px;font-family:'Liberation Serif',serif;color:#9a3aa0">T</div>
<div class="t" style="left:71.8px;top:666.6px;font-size:12px;color:#1a1a1a;">distributorData</div>
<svg style="position:absolute;left:49px;top:684.3px;" width="9" height="7" viewBox="0 0 9 7"><ellipse cx="4.5" cy="3.5" rx="3.8" ry="3" fill="none" stroke="#555" stroke-width="1"/><path d="M0.8 2.5 L4.5 4.2 L8.2 2.5 M4.5 4.2 V6.5" fill="none" stroke="#555" stroke-width="0.9"/></svg>
<div class="t" style="left:56px;top:688.6px;font-size:14px;font-family:'Liberation Serif',serif;color:#9a3aa0">T</div>
<div class="t" style="left:71.8px;top:686.6px;font-size:12px;color:#1a1a1a;">ecRepresentativeData</div>
<svg style="position:absolute;left:49px;top:704.3px;" width="9" height="7" viewBox="0 0 9 7"><ellipse cx="4.5" cy="3.5" rx="3.8" ry="3" fill="none" stroke="#555" stroke-width="1"/><path d="M0.8 2.5 L4.5 4.2 L8.2 2.5 M4.5 4.2 V6.5" fill="none" stroke="#555" stroke-width="0.9"/></svg>
<div class="t" style="left:56px;top:708.6px;font-size:14px;font-family:'Liberation Serif',serif;color:#9a3aa0">T</div>
<div class="t" style="left:71.8px;top:706.6px;font-size:12px;color:#1a1a1a;">expiryDate</div>
<svg style="position:absolute;left:49px;top:724.3px;" width="9" height="7" viewBox="0 0 9 7"><ellipse cx="4.5" cy="3.5" rx="3.8" ry="3" fill="none" stroke="#555" stroke-width="1"/><path d="M0.8 2.5 L4.5 4.2 L8.2 2.5 M4.5 4.2 V6.5" fill="none" stroke="#555" stroke-width="0.9"/></svg>
<div class="t" style="left:56px;top:728.6px;font-size:14px;font-family:'Liberation Serif',serif;color:#9a3aa0">T</div>
<div class="t" style="left:71.8px;top:726.6px;font-size:12px;color:#1a1a1a;">importerData</div>
<svg style="position:absolute;left:49px;top:744.3px;" width="9" height="7" viewBox="0 0 9 7"><ellipse cx="4.5" cy="3.5" rx="3.8" ry="3" fill="none" stroke="#555" stroke-width="1"/><path d="M0.8 2.5 L4.5 4.2 L8.2 2.5 M4.5 4.2 V6.5" fill="none" stroke="#555" stroke-width="0.9"/></svg>
<div class="t" style="left:56px;top:748.6px;font-size:14px;font-family:'Liberation Serif',serif;color:#9a3aa0">T</div>
<div class="t" style="left:71.8px;top:746.6px;font-size:12px;color:#1a1a1a;">itemDescription</div>
<svg style="position:absolute;left:49px;top:764.3px;" width="9" height="7" viewBox="0 0 9 7"><ellipse cx="4.5" cy="3.5" rx="3.8" ry="3" fill="none" stroke="#555" stroke-width="1"/><path d="M0.8 2.5 L4.5 4.2 L8.2 2.5 M4.5 4.2 V6.5" fill="none" stroke="#555" stroke-width="0.9"/></svg>
<div class="t" style="left:56px;top:768.6px;font-size:14px;font-family:'Liberation Serif',serif;color:#9a3aa0">T</div>
<div class="t" style="left:71.8px;top:766.6px;font-size:12px;color:#1a1a1a;">itemDescription2</div>
<svg style="position:absolute;left:49px;top:784.3px;" width="9" height="7" viewBox="0 0 9 7"><ellipse cx="4.5" cy="3.5" rx="3.8" ry="3" fill="none" stroke="#555" stroke-width="1"/><path d="M0.8 2.5 L4.5 4.2 L8.2 2.5 M4.5 4.2 V6.5" fill="none" stroke="#555" stroke-width="0.9"/></svg>
<div class="t" style="left:56px;top:788.6px;font-size:14px;font-family:'Liberation Serif',serif;color:#9a3aa0">T</div>
<div class="t" style="left:71.8px;top:786.6px;font-size:12px;color:#1a1a1a;">itemNo</div>
<svg style="position:absolute;left:49px;top:804.3px;" width="9" height="7" viewBox="0 0 9 7"><ellipse cx="4.5" cy="3.5" rx="3.8" ry="3" fill="none" stroke="#555" stroke-width="1"/><path d="M0.8 2.5 L4.5 4.2 L8.2 2.5 M4.5 4.2 V6.5" fill="none" stroke="#555" stroke-width="0.9"/></svg>
<div class="t" style="left:56px;top:808.6px;font-size:14px;font-family:'Liberation Serif',serif;color:#9a3aa0">T</div>
<div class="t" style="left:71.8px;top:806.6px;font-size:12px;color:#1a1a1a;">labelingStandard</div>
<div style="position:absolute;left:11px;top:822.4px;width:289px;height:19.5px;background:#c3dcf0;box-sizing:border-box;border:1px solid #99c2e6"></div>
<svg style="position:absolute;left:49px;top:824.3px;" width="9" height="7" viewBox="0 0 9 7"><ellipse cx="4.5" cy="3.5" rx="3.8" ry="3" fill="none" stroke="#555" stroke-width="1"/><path d="M0.8 2.5 L4.5 4.2 L8.2 2.5 M4.5 4.2 V6.5" fill="none" stroke="#555" stroke-width="0.9"/></svg>
<div class="t" style="left:56px;top:828.6px;font-size:14px;font-family:'Liberation Serif',serif;color:#9a3aa0">T</div>
<div class="t" style="left:71.8px;top:826.6px;font-size:12px;color:#1a1a1a;">lotNo</div>
<svg style="position:absolute;left:49px;top:844.3px;" width="9" height="7" viewBox="0 0 9 7"><ellipse cx="4.5" cy="3.5" rx="3.8" ry="3" fill="none" stroke="#555" stroke-width="1"/><path d="M0.8 2.5 L4.5 4.2 L8.2 2.5 M4.5 4.2 V6.5" fill="none" stroke="#555" stroke-width="0.9"/></svg>
<div class="t" style="left:56px;top:848.6px;font-size:14px;font-family:'Liberation Serif',serif;color:#9a3aa0">T</div>
<div class="t" style="left:71.8px;top:846.6px;font-size:12px;color:#1a1a1a;">manufDate</div>
<svg style="position:absolute;left:49px;top:864.3px;" width="9" height="7" viewBox="0 0 9 7"><ellipse cx="4.5" cy="3.5" rx="3.8" ry="3" fill="none" stroke="#555" stroke-width="1"/><path d="M0.8 2.5 L4.5 4.2 L8.2 2.5 M4.5 4.2 V6.5" fill="none" stroke="#555" stroke-width="0.9"/></svg>
<div class="t" style="left:56px;top:868.6px;font-size:14px;font-family:'Liberation Serif',serif;color:#9a3aa0">T</div>
<div class="t" style="left:71.8px;top:866.6px;font-size:12px;color:#1a1a1a;">manufDateHibc</div>
<svg style="position:absolute;left:49px;top:884.3px;" width="9" height="7" viewBox="0 0 9 7"><ellipse cx="4.5" cy="3.5" rx="3.8" ry="3" fill="none" stroke="#555" stroke-width="1"/><path d="M0.8 2.5 L4.5 4.2 L8.2 2.5 M4.5 4.2 V6.5" fill="none" stroke="#555" stroke-width="0.9"/></svg>
<div class="t" style="left:56px;top:888.6px;font-size:14px;font-family:'Liberation Serif',serif;color:#9a3aa0">T</div>
<div class="t" style="left:71.8px;top:886.6px;font-size:12px;color:#1a1a1a;">productDescription</div>
<svg style="position:absolute;left:49px;top:904.3px;" width="9" height="7" viewBox="0 0 9 7"><ellipse cx="4.5" cy="3.5" rx="3.8" ry="3" fill="none" stroke="#555" stroke-width="1"/><path d="M0.8 2.5 L4.5 4.2 L8.2 2.5 M4.5 4.2 V6.5" fill="none" stroke="#555" stroke-width="0.9"/></svg>
<div class="t" style="left:56px;top:908.6px;font-size:14px;font-family:'Liberation Serif',serif;color:#9a3aa0">T</div>
<div class="t" style="left:71.8px;top:906.6px;font-size:12px;color:#1a1a1a;">publicAgency</div>
<svg style="position:absolute;left:49px;top:924.3px;" width="9" height="7" viewBox="0 0 9 7"><ellipse cx="4.5" cy="3.5" rx="3.8" ry="3" fill="none" stroke="#555" stroke-width="1"/><path d="M0.8 2.5 L4.5 4.2 L8.2 2.5 M4.5 4.2 V6.5" fill="none" stroke="#555" stroke-width="0.9"/></svg>
<div class="t" style="left:56px;top:928.6px;font-size:14px;font-family:'Liberation Serif',serif;color:#9a3aa0">T</div>
<div class="t" style="left:71.8px;top:926.6px;font-size:12px;color:#1a1a1a;">referenceNo</div>
<svg style="position:absolute;left:49px;top:944.3px;" width="9" height="7" viewBox="0 0 9 7"><ellipse cx="4.5" cy="3.5" rx="3.8" ry="3" fill="none" stroke="#555" stroke-width="1"/><path d="M0.8 2.5 L4.5 4.2 L8.2 2.5 M4.5 4.2 V6.5" fill="none" stroke="#555" stroke-width="0.9"/></svg>
<div class="t" style="left:56px;top:948.6px;font-size:14px;font-family:'Liberation Serif',serif;color:#9a3aa0">T</div>
<div class="t" style="left:71.8px;top:946.6px;font-size:12px;color:#1a1a1a;">serialNo</div>
<svg style="position:absolute;left:49px;top:964.3px;" width="9" height="7" viewBox="0 0 9 7"><ellipse cx="4.5" cy="3.5" rx="3.8" ry="3" fill="none" stroke="#555" stroke-width="1"/><path d="M0.8 2.5 L4.5 4.2 L8.2 2.5 M4.5 4.2 V6.5" fill="none" stroke="#555" stroke-width="0.9"/></svg>
<div class="t" style="left:56px;top:968.6px;font-size:14px;font-family:'Liberation Serif',serif;color:#9a3aa0">T</div>
<div class="t" style="left:71.8px;top:966.6px;font-size:12px;color:#1a1a1a;transform:scaleX(0.912);transform-origin:0 0">sym ALTERNATING CURRENT</div>
<svg style="position:absolute;left:49px;top:984.3px;" width="9" height="7" viewBox="0 0 9 7"><ellipse cx="4.5" cy="3.5" rx="3.8" ry="3" fill="none" stroke="#555" stroke-width="1"/><path d="M0.8 2.5 L4.5 4.2 L8.2 2.5 M4.5 4.2 V6.5" fill="none" stroke="#555" stroke-width="0.9"/></svg>
<div class="t" style="left:56px;top:988.6px;font-size:14px;font-family:'Liberation Serif',serif;color:#9a3aa0">T</div>
<div class="t" style="left:71.8px;top:986.6px;font-size:12px;color:#1a1a1a;transform:scaleX(0.912);transform-origin:0 0">sym ALTERNATING CURRENT Text</div>
<svg style="position:absolute;left:49px;top:1004.3px;" width="9" height="7" viewBox="0 0 9 7"><ellipse cx="4.5" cy="3.5" rx="3.8" ry="3" fill="none" stroke="#555" stroke-width="1"/><path d="M0.8 2.5 L4.5 4.2 L8.2 2.5 M4.5 4.2 V6.5" fill="none" stroke="#555" stroke-width="0.9"/></svg>
<div class="t" style="left:56px;top:1008.6px;font-size:14px;font-family:'Liberation Serif',serif;color:#9a3aa0">T</div>
<div class="t" style="left:71.8px;top:1006.6px;font-size:12px;color:#1a1a1a;transform:scaleX(0.912);transform-origin:0 0">sym ANIMAL TISSUES/CELLS</div>
<svg style="position:absolute;left:49px;top:1024.3px;" width="9" height="7" viewBox="0 0 9 7"><ellipse cx="4.5" cy="3.5" rx="3.8" ry="3" fill="none" stroke="#555" stroke-width="1"/><path d="M0.8 2.5 L4.5 4.2 L8.2 2.5 M4.5 4.2 V6.5" fill="none" stroke="#555" stroke-width="0.9"/></svg>
<div class="t" style="left:56px;top:1028.6px;font-size:14px;font-family:'Liberation Serif',serif;color:#9a3aa0">T</div>
<div class="t" style="left:71.8px;top:1026.6px;font-size:12px;color:#1a1a1a;transform:scaleX(0.912);transform-origin:0 0">sym ANIMAL TISSUES/CELLS Text</div>
<div style="position:absolute;left:0px;top:58px;width:2px;height:974px;background:#101b7a"></div>
<div style="position:absolute;left:327px;top:147px;width:1010px;height:885px;background:#e6e6e6"></div>
<div style="position:absolute;left:327px;top:147px;width:7px;height:885px;background:#e7e7e7"></div>
<div style="position:absolute;left:327px;top:147px;width:1010px;height:3.5px;background:#e2e2e2"></div>
<div style="position:absolute;left:327px;top:150.5px;width:1010px;height:3.5px;background:#ebebeb"></div>
<div style="position:absolute;left:388.5px;top:154px;width:925px;height:15px;background:#d4d4d4"></div>
<div style="position:absolute;left:334px;top:247.5px;width:15px;height:740px;background:#d4d4d4"></div>
<div style="position:absolute;left:334px;top:954.5px;width:15px;height:1px;background:#a8a8a8"></div>
<svg style="position:absolute;left:0;top:0" width="1337" height="1032"><rect x="351.0" y="166" width="1.1" height="2.5" fill="#666"/><rect x="360.3" y="166" width="1.1" height="2.5" fill="#666"/><rect x="369.5" y="166" width="1.1" height="2.5" fill="#666"/><rect x="378.8" y="166" width="1.1" height="2.5" fill="#666"/><rect x="388.0" y="158.5" width="1.6" height="10" fill="#333"/><text x="391.5" y="163.5" font-family="Liberation Sans" font-size="8.5" fill="#222">0</text><rect x="397.2" y="166" width="1.1" height="2.5" fill="#666"/><rect x="406.5" y="166" width="1.1" height="2.5" fill="#666"/><rect x="415.7" y="166" width="1.1" height="2.5" fill="#666"/><rect x="425.0" y="166" width="1.1" height="2.5" fill="#666"/><rect x="434.2" y="164.5" width="1.3" height="4" fill="#444"/><rect x="443.5" y="166" width="1.1" height="2.5" fill="#666"/><rect x="452.7" y="166" width="1.1" height="2.5" fill="#666"/><rect x="462.0" y="166" width="1.1" height="2.5" fill="#666"/><rect x="471.2" y="166" width="1.1" height="2.5" fill="#666"/><rect x="480.4" y="158.5" width="1.6" height="10" fill="#333"/><text x="483.9" y="163.5" font-family="Liberation Sans" font-size="8.5" fill="#222">10</text><rect x="489.7" y="166" width="1.1" height="2.5" fill="#666"/><rect x="498.9" y="166" width="1.1" height="2.5" fill="#666"/><rect x="508.2" y="166" width="1.1" height="2.5" fill="#666"/><rect x="517.4" y="166" width="1.1" height="2.5" fill="#666"/><rect x="526.7" y="164.5" width="1.3" height="4" fill="#444"/><rect x="535.9" y="166" width="1.1" height="2.5" fill="#666"/><rect x="545.2" y="166" width="1.1" height="2.5" fill="#666"/><rect x="554.4" y="166" width="1.1" height="2.5" fill="#666"/><rect x="563.7" y="166" width="1.1" height="2.5" fill="#666"/><rect x="572.9" y="158.5" width="1.6" height="10" fill="#333"/><text x="576.4" y="163.5" font-family="Liberation Sans" font-size="8.5" fill="#222">20</text><rect x="582.1" y="166" width="1.1" height="2.5" fill="#666"/><rect x="591.4" y="166" width="1.1" height="2.5" fill="#666"/><rect x="600.6" y="166" width="1.1" height="2.5" fill="#666"/><rect x="609.9" y="166" width="1.1" height="2.5" fill="#666"/><rect x="619.1" y="164.5" width="1.3" height="4" fill="#444"/><rect x="628.4" y="166" width="1.1" height="2.5" fill="#666"/><rect x="637.6" y="166" width="1.1" height="2.5" fill="#666"/><rect x="646.9" y="166" width="1.1" height="2.5" fill="#666"/><rect x="656.1" y="166" width="1.1" height="2.5" fill="#666"/><rect x="665.3" y="158.5" width="1.6" height="10" fill="#333"/><text x="668.8" y="163.5" font-family="Liberation Sans" font-size="8.5" fill="#222">30</text><rect x="674.6" y="166" width="1.1" height="2.5" fill="#666"/><rect x="683.8" y="166" width="1.1" height="2.5" fill="#666"/><rect x="693.1" y="166" width="1.1" height="2.5" fill="#666"/><rect x="702.3" y="166" width="1.1" height="2.5" fill="#666"/><rect x="711.6" y="164.5" width="1.3" height="4" fill="#444"/><rect x="720.8" y="166" width="1.1" height="2.5" fill="#666"/><rect x="730.1" y="166" width="1.1" height="2.5" fill="#666"/><rect x="739.3" y="166" width="1.1" height="2.5" fill="#666"/><rect x="748.6" y="166" width="1.1" height="2.5" fill="#666"/><rect x="757.8" y="158.5" width="1.6" height="10" fill="#333"/><text x="761.3" y="163.5" font-family="Liberation Sans" font-size="8.5" fill="#222">40</text><rect x="767.0" y="166" width="1.1" height="2.5" fill="#666"/><rect x="776.3" y="166" width="1.1" height="2.5" fill="#666"/><rect x="785.5" y="166" width="1.1" height="2.5" fill="#666"/><rect x="794.8" y="166" width="1.1" height="2.5" fill="#666"/><rect x="804.0" y="164.5" width="1.3" height="4" fill="#444"/><rect x="813.3" y="166" width="1.1" height="2.5" fill="#666"/><rect x="822.5" y="166" width="1.1" height="2.5" fill="#666"/><rect x="831.8" y="166" width="1.1" height="2.5" fill="#666"/><rect x="841.0" y="166" width="1.1" height="2.5" fill="#666"/><rect x="850.2" y="158.5" width="1.6" height="10" fill="#333"/><text x="853.8" y="163.5" font-family="Liberation Sans" font-size="8.5" fill="#222">50</text><rect x="859.5" y="166" width="1.1" height="2.5" fill="#666"/><rect x="868.7" y="166" width="1.1" height="2.5" fill="#666"/><rect x="878.0" y="166" width="1.1" height="2.5" fill="#666"/><rect x="887.2" y="166" width="1.1" height="2.5" fill="#666"/><rect x="896.5" y="164.5" width="1.3" height="4" fill="#444"/><rect x="905.7" y="166" width="1.1" height="2.5" fill="#666"/><rect x="915.0" y="166" width="1.1" height="2.5" fill="#666"/><rect x="924.2" y="166" width="1.1" height="2.5" fill="#666"/><rect x="933.5" y="166" width="1.1" height="2.5" fill="#666"/><rect x="942.7" y="158.5" width="1.6" height="10" fill="#333"/><text x="946.2" y="163.5" font-family="Liberation Sans" font-size="8.5" fill="#222">60</text><rect x="951.9" y="166" width="1.1" height="2.5" fill="#666"/><rect x="961.2" y="166" width="1.1" height="2.5" fill="#666"/><rect x="970.4" y="166" width="1.1" height="2.5" fill="#666"/><rect x="979.7" y="166" width="1.1" height="2.5" fill="#666"/><rect x="988.9" y="164.5" width="1.3" height="4" fill="#444"/><rect x="998.2" y="166" width="1.1" height="2.5" fill="#666"/><rect x="1007.4" y="166" width="1.1" height="2.5" fill="#666"/><rect x="1016.7" y="166" width="1.1" height="2.5" fill="#666"/><rect x="1025.9" y="166" width="1.1" height="2.5" fill="#666"/><rect x="1035.2" y="158.5" width="1.6" height="10" fill="#333"/><text x="1038.7" y="163.5" font-family="Liberation Sans" font-size="8.5" fill="#222">70</text><rect x="1044.4" y="166" width="1.1" height="2.5" fill="#666"/><rect x="1053.6" y="166" width="1.1" height="2.5" fill="#666"/><rect x="1062.9" y="166" width="1.1" height="2.5" fill="#666"/><rect x="1072.1" y="166" width="1.1" height="2.5" fill="#666"/><rect x="1081.4" y="164.5" width="1.3" height="4" fill="#444"/><rect x="1090.6" y="166" width="1.1" height="2.5" fill="#666"/><rect x="1099.9" y="166" width="1.1" height="2.5" fill="#666"/><rect x="1109.1" y="166" width="1.1" height="2.5" fill="#666"/><rect x="1118.4" y="166" width="1.1" height="2.5" fill="#666"/><rect x="1127.6" y="158.5" width="1.6" height="10" fill="#333"/><text x="1131.1" y="163.5" font-family="Liberation Sans" font-size="8.5" fill="#222">80</text><rect x="1136.8" y="166" width="1.1" height="2.5" fill="#666"/><rect x="1146.1" y="166" width="1.1" height="2.5" fill="#666"/><rect x="1155.3" y="166" width="1.1" height="2.5" fill="#666"/><rect x="1164.6" y="166" width="1.1" height="2.5" fill="#666"/><rect x="1173.8" y="164.5" width="1.3" height="4" fill="#444"/><rect x="1183.1" y="166" width="1.1" height="2.5" fill="#666"/><rect x="1192.3" y="166" width="1.1" height="2.5" fill="#666"/><rect x="1201.6" y="166" width="1.1" height="2.5" fill="#666"/><rect x="1210.8" y="166" width="1.1" height="2.5" fill="#666"/><rect x="1220.0" y="158.5" width="1.6" height="10" fill="#333"/><text x="1223.5" y="163.5" font-family="Liberation Sans" font-size="8.5" fill="#222">90</text><rect x="1229.3" y="166" width="1.1" height="2.5" fill="#666"/><rect x="1238.5" y="166" width="1.1" height="2.5" fill="#666"/><rect x="1247.8" y="166" width="1.1" height="2.5" fill="#666"/><rect x="1257.0" y="166" width="1.1" height="2.5" fill="#666"/><rect x="1266.3" y="164.5" width="1.3" height="4" fill="#444"/><rect x="1275.5" y="166" width="1.1" height="2.5" fill="#666"/><rect x="1284.8" y="166" width="1.1" height="2.5" fill="#666"/><rect x="1294.0" y="166" width="1.1" height="2.5" fill="#666"/><rect x="1303.3" y="166" width="1.1" height="2.5" fill="#666"/><rect x="1312.5" y="158.5" width="1.6" height="10" fill="#333"/><text x="1316.0" y="163.5" font-family="Liberation Sans" font-size="8.5" fill="#222">100</text><rect x="346" y="173.0" width="2.5" height="1.1" fill="#666"/><rect x="346" y="182.3" width="2.5" height="1.1" fill="#666"/><rect x="346" y="191.5" width="2.5" height="1.1" fill="#666"/><rect x="345" y="200.8" width="4" height="1.3" fill="#444"/><rect x="346" y="210.0" width="2.5" height="1.1" fill="#666"/><rect x="346" y="219.3" width="2.5" height="1.1" fill="#666"/><rect x="346" y="228.5" width="2.5" height="1.1" fill="#666"/><rect x="346" y="237.8" width="2.5" height="1.1" fill="#666"/><rect x="339" y="247.0" width="10" height="1.6" fill="#333"/><text transform="translate(336.5,250.5) rotate(90)" font-family="Liberation Sans" font-size="8.5" fill="#222">0</text><rect x="346" y="256.2" width="2.5" height="1.1" fill="#666"/><rect x="346" y="265.5" width="2.5" height="1.1" fill="#666"/><rect x="346" y="274.7" width="2.5" height="1.1" fill="#666"/><rect x="346" y="284.0" width="2.5" height="1.1" fill="#666"/><rect x="345" y="293.2" width="4" height="1.3" fill="#444"/><rect x="346" y="302.5" width="2.5" height="1.1" fill="#666"/><rect x="346" y="311.7" width="2.5" height="1.1" fill="#666"/><rect x="346" y="321.0" width="2.5" height="1.1" fill="#666"/><rect x="346" y="330.2" width="2.5" height="1.1" fill="#666"/><rect x="339" y="339.4" width="10" height="1.6" fill="#333"/><text transform="translate(336.5,342.9) rotate(90)" font-family="Liberation Sans" font-size="8.5" fill="#222">10</text><rect x="346" y="348.7" width="2.5" height="1.1" fill="#666"/><rect x="346" y="357.9" width="2.5" height="1.1" fill="#666"/><rect x="346" y="367.2" width="2.5" height="1.1" fill="#666"/><rect x="346" y="376.4" width="2.5" height="1.1" fill="#666"/><rect x="345" y="385.7" width="4" height="1.3" fill="#444"/><rect x="346" y="394.9" width="2.5" height="1.1" fill="#666"/><rect x="346" y="404.2" width="2.5" height="1.1" fill="#666"/><rect x="346" y="413.4" width="2.5" height="1.1" fill="#666"/><rect x="346" y="422.7" width="2.5" height="1.1" fill="#666"/><rect x="339" y="431.9" width="10" height="1.6" fill="#333"/><text transform="translate(336.5,435.4) rotate(90)" font-family="Liberation Sans" font-size="8.5" fill="#222">20</text><rect x="346" y="441.1" width="2.5" height="1.1" fill="#666"/><rect x="346" y="450.4" width="2.5" height="1.1" fill="#666"/><rect x="346" y="459.6" width="2.5" height="1.1" fill="#666"/><rect x="346" y="468.9" width="2.5" height="1.1" fill="#666"/><rect x="345" y="478.1" width="4" height="1.3" fill="#444"/><rect x="346" y="487.4" width="2.5" height="1.1" fill="#666"/><rect x="346" y="496.6" width="2.5" height="1.1" fill="#666"/><rect x="346" y="505.9" width="2.5" height="1.1" fill="#666"/><rect x="346" y="515.1" width="2.5" height="1.1" fill="#666"/><rect x="339" y="524.3" width="10" height="1.6" fill="#333"/><text transform="translate(336.5,527.8) rotate(90)" font-family="Liberation Sans" font-size="8.5" fill="#222">30</text><rect x="346" y="533.6" width="2.5" height="1.1" fill="#666"/><rect x="346" y="542.8" width="2.5" height="1.1" fill="#666"/><rect x="346" y="552.1" width="2.5" height="1.1" fill="#666"/><rect x="346" y="561.3" width="2.5" height="1.1" fill="#666"/><rect x="345" y="570.6" width="4" height="1.3" fill="#444"/><rect x="346" y="579.8" width="2.5" height="1.1" fill="#666"/><rect x="346" y="589.1" width="2.5" height="1.1" fill="#666"/><rect x="346" y="598.3" width="2.5" height="1.1" fill="#666"/><rect x="346" y="607.6" width="2.5" height="1.1" fill="#666"/><rect x="339" y="616.8" width="10" height="1.6" fill="#333"/><text transform="translate(336.5,620.3) rotate(90)" font-family="Liberation Sans" font-size="8.5" fill="#222">40</text><rect x="346" y="626.0" width="2.5" height="1.1" fill="#666"/><rect x="346" y="635.3" width="2.5" height="1.1" fill="#666"/><rect x="346" y="644.5" width="2.5" height="1.1" fill="#666"/><rect x="346" y="653.8" width="2.5" height="1.1" fill="#666"/><rect x="345" y="663.0" width="4" height="1.3" fill="#444"/><rect x="346" y="672.3" width="2.5" height="1.1" fill="#666"/><rect x="346" y="681.5" width="2.5" height="1.1" fill="#666"/><rect x="346" y="690.8" width="2.5" height="1.1" fill="#666"/><rect x="346" y="700.0" width="2.5" height="1.1" fill="#666"/><rect x="339" y="709.2" width="10" height="1.6" fill="#333"/><text transform="translate(336.5,712.8) rotate(90)" font-family="Liberation Sans" font-size="8.5" fill="#222">50</text><rect x="346" y="718.5" width="2.5" height="1.1" fill="#666"/><rect x="346" y="727.7" width="2.5" height="1.1" fill="#666"/><rect x="346" y="737.0" width="2.5" height="1.1" fill="#666"/><rect x="346" y="746.2" width="2.5" height="1.1" fill="#666"/><rect x="345" y="755.5" width="4" height="1.3" fill="#444"/><rect x="346" y="764.7" width="2.5" height="1.1" fill="#666"/><rect x="346" y="774.0" width="2.5" height="1.1" fill="#666"/><rect x="346" y="783.2" width="2.5" height="1.1" fill="#666"/><rect x="346" y="792.5" width="2.5" height="1.1" fill="#666"/><rect x="339" y="801.7" width="10" height="1.6" fill="#333"/><text transform="translate(336.5,805.2) rotate(90)" font-family="Liberation Sans" font-size="8.5" fill="#222">60</text><rect x="346" y="810.9" width="2.5" height="1.1" fill="#666"/><rect x="346" y="820.2" width="2.5" height="1.1" fill="#666"/><rect x="346" y="829.4" width="2.5" height="1.1" fill="#666"/><rect x="346" y="838.7" width="2.5" height="1.1" fill="#666"/><rect x="345" y="847.9" width="4" height="1.3" fill="#444"/><rect x="346" y="857.2" width="2.5" height="1.1" fill="#666"/><rect x="346" y="866.4" width="2.5" height="1.1" fill="#666"/><rect x="346" y="875.7" width="2.5" height="1.1" fill="#666"/><rect x="346" y="884.9" width="2.5" height="1.1" fill="#666"/><rect x="339" y="894.1" width="10" height="1.6" fill="#333"/><text transform="translate(336.5,897.6) rotate(90)" font-family="Liberation Sans" font-size="8.5" fill="#222">70</text><rect x="346" y="903.4" width="2.5" height="1.1" fill="#666"/><rect x="346" y="912.6" width="2.5" height="1.1" fill="#666"/><rect x="346" y="921.9" width="2.5" height="1.1" fill="#666"/><rect x="346" y="931.1" width="2.5" height="1.1" fill="#666"/><rect x="345" y="940.4" width="4" height="1.3" fill="#444"/><rect x="346" y="949.6" width="2.5" height="1.1" fill="#666"/><rect x="346" y="958.9" width="2.5" height="1.1" fill="#666"/><rect x="346" y="968.1" width="2.5" height="1.1" fill="#666"/><rect x="346" y="977.4" width="2.5" height="1.1" fill="#666"/><rect x="339" y="986.6" width="10" height="1.6" fill="#333"/><text transform="translate(336.5,990.1) rotate(90)" font-family="Liberation Sans" font-size="8.5" fill="#222">80</text><rect x="346" y="995.8" width="2.5" height="1.1" fill="#666"/><rect x="346" y="1005.1" width="2.5" height="1.1" fill="#666"/><rect x="346" y="1014.3" width="2.5" height="1.1" fill="#666"/><rect x="346" y="1023.6" width="2.5" height="1.1" fill="#666"/></svg>
<div style="position:absolute;left:494px;top:154px;width:107px;height:15px;background:rgba(164,208,236,0.5)"></div>
<div style="position:absolute;left:334px;top:433.5px;width:15px;height:37.5px;background:rgba(164,208,236,0.5)"></div>
<div style="position:absolute;left:387.5px;top:247.5px;width:925.5px;height:739px;background:#f4f4cc;box-shadow:1px 1px 14px 3px rgba(0,0,0,0.6)"></div>
<div style="position:absolute;left:387.5px;top:247.5px;width:925.5px;height:739px;box-sizing:border-box;background:#fff;border:1.6px solid #111;border-radius:11px"></div>
<div style="position:absolute;left:389px;top:397px;width:924px;height:9px;background:#c8c8c8"></div>
<div style="position:absolute;left:427px;top:425px;width:55px;height:55px;box-sizing:border-box;border:1px solid #333;background:#fff"></div>
<svg style="position:absolute;left:429px;top:426.5px;" width="12" height="12" viewBox="0 0 12 12"><path d="M6.0 0.5 L11.5 3.25 V8.75 L6.0 11.5 L0.5 8.75 V3.25 Z M0.5 3.25 L6.0 6.0 L11.5 3.25 M6.0 6.0 V11.5" fill="none" stroke="#6e5c8c" stroke-width="0.85" stroke-linejoin="round"/></svg>
<svg style="position:absolute;left:447.6px;top:440.8px;" width="15" height="30" viewBox="0 0 15 30"><path d="M1.1 4.8 C1.7 1.7 4.1 0.3 7 0.3 C10.6 0.3 13 2.7 13 6.3 C13 9.4 11.3 11 9.3 12.5 C7.4 13.9 6.4 15.2 6.4 18.2 V21" fill="none" stroke="#000" stroke-width="2.9"/><circle cx="6.4" cy="26.6" r="2.4" fill="#000"/></svg>
<div style="position:absolute;left:427px;top:485px;width:55px;height:55px;box-sizing:border-box;border:1px solid #333;background:#fff"></div>
<svg style="position:absolute;left:429px;top:486.5px;" width="12" height="12" viewBox="0 0 12 12"><path d="M6.0 0.5 L11.5 3.25 V8.75 L6.0 11.5 L0.5 8.75 V3.25 Z M0.5 3.25 L6.0 6.0 L11.5 3.25 M6.0 6.0 V11.5" fill="none" stroke="#6e5c8c" stroke-width="0.85" stroke-linejoin="round"/></svg>
<svg style="position:absolute;left:447.6px;top:500.8px;" width="15" height="30" viewBox="0 0 15 30"><path d="M1.1 4.8 C1.7 1.7 4.1 0.3 7 0.3 C10.6 0.3 13 2.7 13 6.3 C13 9.4 11.3 11 9.3 12.5 C7.4 13.9 6.4 15.2 6.4 18.2 V21" fill="none" stroke="#000" stroke-width="2.9"/><circle cx="6.4" cy="26.6" r="2.4" fill="#000"/></svg>
<div style="position:absolute;left:427px;top:545px;width:55px;height:55px;box-sizing:border-box;border:1px solid #333;background:#fff"></div>
<svg style="position:absolute;left:429px;top:546.5px;" width="12" height="12" viewBox="0 0 12 12"><path d="M6.0 0.5 L11.5 3.25 V8.75 L6.0 11.5 L0.5 8.75 V3.25 Z M0.5 3.25 L6.0 6.0 L11.5 3.25 M6.0 6.0 V11.5" fill="none" stroke="#6e5c8c" stroke-width="0.85" stroke-linejoin="round"/></svg>
<svg style="position:absolute;left:447.6px;top:560.8px;" width="15" height="30" viewBox="0 0 15 30"><path d="M1.1 4.8 C1.7 1.7 4.1 0.3 7 0.3 C10.6 0.3 13 2.7 13 6.3 C13 9.4 11.3 11 9.3 12.5 C7.4 13.9 6.4 15.2 6.4 18.2 V21" fill="none" stroke="#000" stroke-width="2.9"/><circle cx="6.4" cy="26.6" r="2.4" fill="#000"/></svg>
<div style="position:absolute;left:928px;top:425px;width:55px;height:55px;box-sizing:border-box;border:1px solid #333;background:#fff"></div>
<svg style="position:absolute;left:930px;top:426.5px;" width="12" height="12" viewBox="0 0 12 12"><path d="M6.0 0.5 L11.5 3.25 V8.75 L6.0 11.5 L0.5 8.75 V3.25 Z M0.5 3.25 L6.0 6.0 L11.5 3.25 M6.0 6.0 V11.5" fill="none" stroke="#6e5c8c" stroke-width="0.85" stroke-linejoin="round"/></svg>
<svg style="position:absolute;left:948.6px;top:440.8px;" width="15" height="30" viewBox="0 0 15 30"><path d="M1.1 4.8 C1.7 1.7 4.1 0.3 7 0.3 C10.6 0.3 13 2.7 13 6.3 C13 9.4 11.3 11 9.3 12.5 C7.4 13.9 6.4 15.2 6.4 18.2 V21" fill="none" stroke="#000" stroke-width="2.9"/><circle cx="6.4" cy="26.6" r="2.4" fill="#000"/></svg>
<div style="position:absolute;left:928px;top:485px;width:55px;height:55px;box-sizing:border-box;border:1px solid #333;background:#fff"></div>
<svg style="position:absolute;left:930px;top:486.5px;" width="12" height="12" viewBox="0 0 12 12"><path d="M6.0 0.5 L11.5 3.25 V8.75 L6.0 11.5 L0.5 8.75 V3.25 Z M0.5 3.25 L6.0 6.0 L11.5 3.25 M6.0 6.0 V11.5" fill="none" stroke="#6e5c8c" stroke-width="0.85" stroke-linejoin="round"/></svg>
<svg style="position:absolute;left:948.6px;top:500.8px;" width="15" height="30" viewBox="0 0 15 30"><path d="M1.1 4.8 C1.7 1.7 4.1 0.3 7 0.3 C10.6 0.3 13 2.7 13 6.3 C13 9.4 11.3 11 9.3 12.5 C7.4 13.9 6.4 15.2 6.4 18.2 V21" fill="none" stroke="#000" stroke-width="2.9"/><circle cx="6.4" cy="26.6" r="2.4" fill="#000"/></svg>
<div style="position:absolute;left:928px;top:545px;width:55px;height:55px;box-sizing:border-box;border:1px solid #333;background:#fff"></div>
<svg style="position:absolute;left:930px;top:546.5px;" width="12" height="12" viewBox="0 0 12 12"><path d="M6.0 0.5 L11.5 3.25 V8.75 L6.0 11.5 L0.5 8.75 V3.25 Z M0.5 3.25 L6.0 6.0 L11.5 3.25 M6.0 6.0 V11.5" fill="none" stroke="#6e5c8c" stroke-width="0.85" stroke-linejoin="round"/></svg>
<svg style="position:absolute;left:948.6px;top:560.8px;" width="15" height="30" viewBox="0 0 15 30"><path d="M1.1 4.8 C1.7 1.7 4.1 0.3 7 0.3 C10.6 0.3 13 2.7 13 6.3 C13 9.4 11.3 11 9.3 12.5 C7.4 13.9 6.4 15.2 6.4 18.2 V21" fill="none" stroke="#000" stroke-width="2.9"/><circle cx="6.4" cy="26.6" r="2.4" fill="#000"/></svg>
<div style="position:absolute;left:655px;top:545px;width:55px;height:55px;box-sizing:border-box;border:1px solid #333;background:#fff"></div>
<svg style="position:absolute;left:657px;top:546.5px;" width="12" height="12" viewBox="0 0 12 12"><path d="M6.0 0.5 L11.5 3.25 V8.75 L6.0 11.5 L0.5 8.75 V3.25 Z M0.5 3.25 L6.0 6.0 L11.5 3.25 M6.0 6.0 V11.5" fill="none" stroke="#6e5c8c" stroke-width="0.85" stroke-linejoin="round"/></svg>
<svg style="position:absolute;left:675.6px;top:560.8px;" width="15" height="30" viewBox="0 0 15 30"><path d="M1.1 4.8 C1.7 1.7 4.1 0.3 7 0.3 C10.6 0.3 13 2.7 13 6.3 C13 9.4 11.3 11 9.3 12.5 C7.4 13.9 6.4 15.2 6.4 18.2 V21" fill="none" stroke="#000" stroke-width="2.9"/><circle cx="6.4" cy="26.6" r="2.4" fill="#000"/></svg>
<div style="position:absolute;left:726px;top:545px;width:55px;height:55px;box-sizing:border-box;border:1px solid #333;background:#fff"></div>
<svg style="position:absolute;left:728px;top:546.5px;" width="12" height="12" viewBox="0 0 12 12"><path d="M6.0 0.5 L11.5 3.25 V8.75 L6.0 11.5 L0.5 8.75 V3.25 Z M0.5 3.25 L6.0 6.0 L11.5 3.25 M6.0 6.0 V11.5" fill="none" stroke="#6e5c8c" stroke-width="0.85" stroke-linejoin="round"/></svg>
<svg style="position:absolute;left:746.6px;top:560.8px;" width="15" height="30" viewBox="0 0 15 30"><path d="M1.1 4.8 C1.7 1.7 4.1 0.3 7 0.3 C10.6 0.3 13 2.7 13 6.3 C13 9.4 11.3 11 9.3 12.5 C7.4 13.9 6.4 15.2 6.4 18.2 V21" fill="none" stroke="#000" stroke-width="2.9"/><circle cx="6.4" cy="26.6" r="2.4" fill="#000"/></svg>
<div style="position:absolute;left:798px;top:545px;width:55px;height:55px;box-sizing:border-box;border:1px solid #333;background:#fff"></div>
<svg style="position:absolute;left:800px;top:546.5px;" width="12" height="12" viewBox="0 0 12 12"><path d="M6.0 0.5 L11.5 3.25 V8.75 L6.0 11.5 L0.5 8.75 V3.25 Z M0.5 3.25 L6.0 6.0 L11.5 3.25 M6.0 6.0 V11.5" fill="none" stroke="#6e5c8c" stroke-width="0.85" stroke-linejoin="round"/></svg>
<svg style="position:absolute;left:818.6px;top:560.8px;" width="15" height="30" viewBox="0 0 15 30"><path d="M1.1 4.8 C1.7 1.7 4.1 0.3 7 0.3 C10.6 0.3 13 2.7 13 6.3 C13 9.4 11.3 11 9.3 12.5 C7.4 13.9 6.4 15.2 6.4 18.2 V21" fill="none" stroke="#000" stroke-width="2.9"/><circle cx="6.4" cy="26.6" r="2.4" fill="#000"/></svg>
<div style="position:absolute;left:427px;top:626px;width:55px;height:55px;box-sizing:border-box;border:1px solid #333;background:#fff"></div>
<svg style="position:absolute;left:429px;top:627.5px;" width="12" height="12" viewBox="0 0 12 12"><path d="M6.0 0.5 L11.5 3.25 V8.75 L6.0 11.5 L0.5 8.75 V3.25 Z M0.5 3.25 L6.0 6.0 L11.5 3.25 M6.0 6.0 V11.5" fill="none" stroke="#6e5c8c" stroke-width="0.85" stroke-linejoin="round"/></svg>
<svg style="position:absolute;left:447.6px;top:641.8px;" width="15" height="30" viewBox="0 0 15 30"><path d="M1.1 4.8 C1.7 1.7 4.1 0.3 7 0.3 C10.6 0.3 13 2.7 13 6.3 C13 9.4 11.3 11 9.3 12.5 C7.4 13.9 6.4 15.2 6.4 18.2 V21" fill="none" stroke="#000" stroke-width="2.9"/><circle cx="6.4" cy="26.6" r="2.4" fill="#000"/></svg>
<div style="position:absolute;left:504px;top:626px;width:55px;height:55px;box-sizing:border-box;border:1px solid #333;background:#fff"></div>
<svg style="position:absolute;left:506px;top:627.5px;" width="12" height="12" viewBox="0 0 12 12"><path d="M6.0 0.5 L11.5 3.25 V8.75 L6.0 11.5 L0.5 8.75 V3.25 Z M0.5 3.25 L6.0 6.0 L11.5 3.25 M6.0 6.0 V11.5" fill="none" stroke="#6e5c8c" stroke-width="0.85" stroke-linejoin="round"/></svg>
<svg style="position:absolute;left:524.6px;top:641.8px;" width="15" height="30" viewBox="0 0 15 30"><path d="M1.1 4.8 C1.7 1.7 4.1 0.3 7 0.3 C10.6 0.3 13 2.7 13 6.3 C13 9.4 11.3 11 9.3 12.5 C7.4 13.9 6.4 15.2 6.4 18.2 V21" fill="none" stroke="#000" stroke-width="2.9"/><circle cx="6.4" cy="26.6" r="2.4" fill="#000"/></svg>
<div style="position:absolute;left:581px;top:626px;width:55px;height:55px;box-sizing:border-box;border:1px solid #333;background:#fff"></div>
<svg style="position:absolute;left:583px;top:627.5px;" width="12" height="12" viewBox="0 0 12 12"><path d="M6.0 0.5 L11.5 3.25 V8.75 L6.0 11.5 L0.5 8.75 V3.25 Z M0.5 3.25 L6.0 6.0 L11.5 3.25 M6.0 6.0 V11.5" fill="none" stroke="#6e5c8c" stroke-width="0.85" stroke-linejoin="round"/></svg>
<svg style="position:absolute;left:601.6px;top:641.8px;" width="15" height="30" viewBox="0 0 15 30"><path d="M1.1 4.8 C1.7 1.7 4.1 0.3 7 0.3 C10.6 0.3 13 2.7 13 6.3 C13 9.4 11.3 11 9.3 12.5 C7.4 13.9 6.4 15.2 6.4 18.2 V21" fill="none" stroke="#000" stroke-width="2.9"/><circle cx="6.4" cy="26.6" r="2.4" fill="#000"/></svg>
<div style="position:absolute;left:658px;top:626px;width:55px;height:55px;box-sizing:border-box;border:1px solid #333;background:#fff"></div>
<svg style="position:absolute;left:660px;top:627.5px;" width="12" height="12" viewBox="0 0 12 12"><path d="M6.0 0.5 L11.5 3.25 V8.75 L6.0 11.5 L0.5 8.75 V3.25 Z M0.5 3.25 L6.0 6.0 L11.5 3.25 M6.0 6.0 V11.5" fill="none" stroke="#6e5c8c" stroke-width="0.85" stroke-linejoin="round"/></svg>
<svg style="position:absolute;left:678.6px;top:641.8px;" width="15" height="30" viewBox="0 0 15 30"><path d="M1.1 4.8 C1.7 1.7 4.1 0.3 7 0.3 C10.6 0.3 13 2.7 13 6.3 C13 9.4 11.3 11 9.3 12.5 C7.4 13.9 6.4 15.2 6.4 18.2 V21" fill="none" stroke="#000" stroke-width="2.9"/><circle cx="6.4" cy="26.6" r="2.4" fill="#000"/></svg>
<div style="position:absolute;left:736px;top:626px;width:55px;height:55px;box-sizing:border-box;border:1px solid #333;background:#fff"></div>
<svg style="position:absolute;left:738px;top:627.5px;" width="12" height="12" viewBox="0 0 12 12"><path d="M6.0 0.5 L11.5 3.25 V8.75 L6.0 11.5 L0.5 8.75 V3.25 Z M0.5 3.25 L6.0 6.0 L11.5 3.25 M6.0 6.0 V11.5" fill="none" stroke="#6e5c8c" stroke-width="0.85" stroke-linejoin="round"/></svg>
<svg style="position:absolute;left:756.6px;top:641.8px;" width="15" height="30" viewBox="0 0 15 30"><path d="M1.1 4.8 C1.7 1.7 4.1 0.3 7 0.3 C10.6 0.3 13 2.7 13 6.3 C13 9.4 11.3 11 9.3 12.5 C7.4 13.9 6.4 15.2 6.4 18.2 V21" fill="none" stroke="#000" stroke-width="2.9"/><circle cx="6.4" cy="26.6" r="2.4" fill="#000"/></svg>
<div style="position:absolute;left:813px;top:626px;width:55px;height:55px;box-sizing:border-box;border:1px solid #333;background:#fff"></div>
<svg style="position:absolute;left:815px;top:627.5px;" width="12" height="12" viewBox="0 0 12 12"><path d="M6.0 0.5 L11.5 3.25 V8.75 L6.0 11.5 L0.5 8.75 V3.25 Z M0.5 3.25 L6.0 6.0 L11.5 3.25 M6.0 6.0 V11.5" fill="none" stroke="#6e5c8c" stroke-width="0.85" stroke-linejoin="round"/></svg>
<svg style="position:absolute;left:833.6px;top:641.8px;" width="15" height="30" viewBox="0 0 15 30"><path d="M1.1 4.8 C1.7 1.7 4.1 0.3 7 0.3 C10.6 0.3 13 2.7 13 6.3 C13 9.4 11.3 11 9.3 12.5 C7.4 13.9 6.4 15.2 6.4 18.2 V21" fill="none" stroke="#000" stroke-width="2.9"/><circle cx="6.4" cy="26.6" r="2.4" fill="#000"/></svg>
<div style="position:absolute;left:890px;top:626px;width:55px;height:55px;box-sizing:border-box;border:1px solid #333;background:#fff"></div>
<svg style="position:absolute;left:892px;top:627.5px;" width="12" height="12" viewBox="0 0 12 12"><path d="M6.0 0.5 L11.5 3.25 V8.75 L6.0 11.5 L0.5 8.75 V3.25 Z M0.5 3.25 L6.0 6.0 L11.5 3.25 M6.0 6.0 V11.5" fill="none" stroke="#6e5c8c" stroke-width="0.85" stroke-linejoin="round"/></svg>
<svg style="position:absolute;left:910.6px;top:641.8px;" width="15" height="30" viewBox="0 0 15 30"><path d="M1.1 4.8 C1.7 1.7 4.1 0.3 7 0.3 C10.6 0.3 13 2.7 13 6.3 C13 9.4 11.3 11 9.3 12.5 C7.4 13.9 6.4 15.2 6.4 18.2 V21" fill="none" stroke="#000" stroke-width="2.9"/><circle cx="6.4" cy="26.6" r="2.4" fill="#000"/></svg>
<div style="position:absolute;left:967px;top:626px;width:55px;height:55px;box-sizing:border-box;border:1px solid #333;background:#fff"></div>
<svg style="position:absolute;left:969px;top:627.5px;" width="12" height="12" viewBox="0 0 12 12"><path d="M6.0 0.5 L11.5 3.25 V8.75 L6.0 11.5 L0.5 8.75 V3.25 Z M0.5 3.25 L6.0 6.0 L11.5 3.25 M6.0 6.0 V11.5" fill="none" stroke="#6e5c8c" stroke-width="0.85" stroke-linejoin="round"/></svg>
<svg style="position:absolute;left:987.6px;top:641.8px;" width="15" height="30" viewBox="0 0 15 30"><path d="M1.1 4.8 C1.7 1.7 4.1 0.3 7 0.3 C10.6 0.3 13 2.7 13 6.3 C13 9.4 11.3 11 9.3 12.5 C7.4 13.9 6.4 15.2 6.4 18.2 V21" fill="none" stroke="#000" stroke-width="2.9"/><circle cx="6.4" cy="26.6" r="2.4" fill="#000"/></svg>
<div style="position:absolute;left:1045px;top:626px;width:55px;height:55px;box-sizing:border-box;border:1px solid #333;background:#fff"></div>
<svg style="position:absolute;left:1047px;top:627.5px;" width="12" height="12" viewBox="0 0 12 12"><path d="M6.0 0.5 L11.5 3.25 V8.75 L6.0 11.5 L0.5 8.75 V3.25 Z M0.5 3.25 L6.0 6.0 L11.5 3.25 M6.0 6.0 V11.5" fill="none" stroke="#6e5c8c" stroke-width="0.85" stroke-linejoin="round"/></svg>
<svg style="position:absolute;left:1065.6px;top:641.8px;" width="15" height="30" viewBox="0 0 15 30"><path d="M1.1 4.8 C1.7 1.7 4.1 0.3 7 0.3 C10.6 0.3 13 2.7 13 6.3 C13 9.4 11.3 11 9.3 12.5 C7.4 13.9 6.4 15.2 6.4 18.2 V21" fill="none" stroke="#000" stroke-width="2.9"/><circle cx="6.4" cy="26.6" r="2.4" fill="#000"/></svg>
<div style="position:absolute;left:1122px;top:626px;width:55px;height:55px;box-sizing:border-box;border:1px solid #333;background:#fff"></div>
<svg style="position:absolute;left:1124px;top:627.5px;" width="12" height="12" viewBox="0 0 12 12"><path d="M6.0 0.5 L11.5 3.25 V8.75 L6.0 11.5 L0.5 8.75 V3.25 Z M0.5 3.25 L6.0 6.0 L11.5 3.25 M6.0 6.0 V11.5" fill="none" stroke="#6e5c8c" stroke-width="0.85" stroke-linejoin="round"/></svg>
<svg style="position:absolute;left:1142.6px;top:641.8px;" width="15" height="30" viewBox="0 0 15 30"><path d="M1.1 4.8 C1.7 1.7 4.1 0.3 7 0.3 C10.6 0.3 13 2.7 13 6.3 C13 9.4 11.3 11 9.3 12.5 C7.4 13.9 6.4 15.2 6.4 18.2 V21" fill="none" stroke="#000" stroke-width="2.9"/><circle cx="6.4" cy="26.6" r="2.4" fill="#000"/></svg>
<div style="position:absolute;left:427px;top:689px;width:55px;height:55px;box-sizing:border-box;border:1px solid #333;background:#fff"></div>
<svg style="position:absolute;left:429px;top:690.5px;" width="12" height="12" viewBox="0 0 12 12"><path d="M6.0 0.5 L11.5 3.25 V8.75 L6.0 11.5 L0.5 8.75 V3.25 Z M0.5 3.25 L6.0 6.0 L11.5 3.25 M6.0 6.0 V11.5" fill="none" stroke="#6e5c8c" stroke-width="0.85" stroke-linejoin="round"/></svg>
<svg style="position:absolute;left:447.6px;top:704.8px;" width="15" height="30" viewBox="0 0 15 30"><path d="M1.1 4.8 C1.7 1.7 4.1 0.3 7 0.3 C10.6 0.3 13 2.7 13 6.3 C13 9.4 11.3 11 9.3 12.5 C7.4 13.9 6.4 15.2 6.4 18.2 V21" fill="none" stroke="#000" stroke-width="2.9"/><circle cx="6.4" cy="26.6" r="2.4" fill="#000"/></svg>
<div style="position:absolute;left:504px;top:689px;width:55px;height:55px;box-sizing:border-box;border:1px solid #333;background:#fff"></div>
<svg style="position:absolute;left:506px;top:690.5px;" width="12" height="12" viewBox="0 0 12 12"><path d="M6.0 0.5 L11.5 3.25 V8.75 L6.0 11.5 L0.5 8.75 V3.25 Z M0.5 3.25 L6.0 6.0 L11.5 3.25 M6.0 6.0 V11.5" fill="none" stroke="#6e5c8c" stroke-width="0.85" stroke-linejoin="round"/></svg>
<svg style="position:absolute;left:524.6px;top:704.8px;" width="15" height="30" viewBox="0 0 15 30"><path d="M1.1 4.8 C1.7 1.7 4.1 0.3 7 0.3 C10.6 0.3 13 2.7 13 6.3 C13 9.4 11.3 11 9.3 12.5 C7.4 13.9 6.4 15.2 6.4 18.2 V21" fill="none" stroke="#000" stroke-width="2.9"/><circle cx="6.4" cy="26.6" r="2.4" fill="#000"/></svg>
<div style="position:absolute;left:581px;top:689px;width:55px;height:55px;box-sizing:border-box;border:1px solid #333;background:#fff"></div>
<svg style="position:absolute;left:583px;top:690.5px;" width="12" height="12" viewBox="0 0 12 12"><path d="M6.0 0.5 L11.5 3.25 V8.75 L6.0 11.5 L0.5 8.75 V3.25 Z M0.5 3.25 L6.0 6.0 L11.5 3.25 M6.0 6.0 V11.5" fill="none" stroke="#6e5c8c" stroke-width="0.85" stroke-linejoin="round"/></svg>
<svg style="position:absolute;left:601.6px;top:704.8px;" width="15" height="30" viewBox="0 0 15 30"><path d="M1.1 4.8 C1.7 1.7 4.1 0.3 7 0.3 C10.6 0.3 13 2.7 13 6.3 C13 9.4 11.3 11 9.3 12.5 C7.4 13.9 6.4 15.2 6.4 18.2 V21" fill="none" stroke="#000" stroke-width="2.9"/><circle cx="6.4" cy="26.6" r="2.4" fill="#000"/></svg>
<div style="position:absolute;left:658px;top:689px;width:55px;height:55px;box-sizing:border-box;border:1px solid #333;background:#fff"></div>
<svg style="position:absolute;left:660px;top:690.5px;" width="12" height="12" viewBox="0 0 12 12"><path d="M6.0 0.5 L11.5 3.25 V8.75 L6.0 11.5 L0.5 8.75 V3.25 Z M0.5 3.25 L6.0 6.0 L11.5 3.25 M6.0 6.0 V11.5" fill="none" stroke="#6e5c8c" stroke-width="0.85" stroke-linejoin="round"/></svg>
<svg style="position:absolute;left:678.6px;top:704.8px;" width="15" height="30" viewBox="0 0 15 30"><path d="M1.1 4.8 C1.7 1.7 4.1 0.3 7 0.3 C10.6 0.3 13 2.7 13 6.3 C13 9.4 11.3 11 9.3 12.5 C7.4 13.9 6.4 15.2 6.4 18.2 V21" fill="none" stroke="#000" stroke-width="2.9"/><circle cx="6.4" cy="26.6" r="2.4" fill="#000"/></svg>
<div style="position:absolute;left:736px;top:689px;width:55px;height:55px;box-sizing:border-box;border:1px solid #333;background:#fff"></div>
<svg style="position:absolute;left:738px;top:690.5px;" width="12" height="12" viewBox="0 0 12 12"><path d="M6.0 0.5 L11.5 3.25 V8.75 L6.0 11.5 L0.5 8.75 V3.25 Z M0.5 3.25 L6.0 6.0 L11.5 3.25 M6.0 6.0 V11.5" fill="none" stroke="#6e5c8c" stroke-width="0.85" stroke-linejoin="round"/></svg>
<svg style="position:absolute;left:756.6px;top:704.8px;" width="15" height="30" viewBox="0 0 15 30"><path d="M1.1 4.8 C1.7 1.7 4.1 0.3 7 0.3 C10.6 0.3 13 2.7 13 6.3 C13 9.4 11.3 11 9.3 12.5 C7.4 13.9 6.4 15.2 6.4 18.2 V21" fill="none" stroke="#000" stroke-width="2.9"/><circle cx="6.4" cy="26.6" r="2.4" fill="#000"/></svg>
<div style="position:absolute;left:813px;top:689px;width:55px;height:55px;box-sizing:border-box;border:1px solid #333;background:#fff"></div>
<svg style="position:absolute;left:815px;top:690.5px;" width="12" height="12" viewBox="0 0 12 12"><path d="M6.0 0.5 L11.5 3.25 V8.75 L6.0 11.5 L0.5 8.75 V3.25 Z M0.5 3.25 L6.0 6.0 L11.5 3.25 M6.0 6.0 V11.5" fill="none" stroke="#6e5c8c" stroke-width="0.85" stroke-linejoin="round"/></svg>
<svg style="position:absolute;left:833.6px;top:704.8px;" width="15" height="30" viewBox="0 0 15 30"><path d="M1.1 4.8 C1.7 1.7 4.1 0.3 7 0.3 C10.6 0.3 13 2.7 13 6.3 C13 9.4 11.3 11 9.3 12.5 C7.4 13.9 6.4 15.2 6.4 18.2 V21" fill="none" stroke="#000" stroke-width="2.9"/><circle cx="6.4" cy="26.6" r="2.4" fill="#000"/></svg>
<div style="position:absolute;left:890px;top:689px;width:55px;height:55px;box-sizing:border-box;border:1px solid #333;background:#fff"></div>
<svg style="position:absolute;left:892px;top:690.5px;" width="12" height="12" viewBox="0 0 12 12"><path d="M6.0 0.5 L11.5 3.25 V8.75 L6.0 11.5 L0.5 8.75 V3.25 Z M0.5 3.25 L6.0 6.0 L11.5 3.25 M6.0 6.0 V11.5" fill="none" stroke="#6e5c8c" stroke-width="0.85" stroke-linejoin="round"/></svg>
<svg style="position:absolute;left:910.6px;top:704.8px;" width="15" height="30" viewBox="0 0 15 30"><path d="M1.1 4.8 C1.7 1.7 4.1 0.3 7 0.3 C10.6 0.3 13 2.7 13 6.3 C13 9.4 11.3 11 9.3 12.5 C7.4 13.9 6.4 15.2 6.4 18.2 V21" fill="none" stroke="#000" stroke-width="2.9"/><circle cx="6.4" cy="26.6" r="2.4" fill="#000"/></svg>
<div style="position:absolute;left:967px;top:689px;width:55px;height:55px;box-sizing:border-box;border:1px solid #333;background:#fff"></div>
<svg style="position:absolute;left:969px;top:690.5px;" width="12" height="12" viewBox="0 0 12 12"><path d="M6.0 0.5 L11.5 3.25 V8.75 L6.0 11.5 L0.5 8.75 V3.25 Z M0.5 3.25 L6.0 6.0 L11.5 3.25 M6.0 6.0 V11.5" fill="none" stroke="#6e5c8c" stroke-width="0.85" stroke-linejoin="round"/></svg>
<svg style="position:absolute;left:987.6px;top:704.8px;" width="15" height="30" viewBox="0 0 15 30"><path d="M1.1 4.8 C1.7 1.7 4.1 0.3 7 0.3 C10.6 0.3 13 2.7 13 6.3 C13 9.4 11.3 11 9.3 12.5 C7.4 13.9 6.4 15.2 6.4 18.2 V21" fill="none" stroke="#000" stroke-width="2.9"/><circle cx="6.4" cy="26.6" r="2.4" fill="#000"/></svg>
<div style="position:absolute;left:1045px;top:689px;width:55px;height:55px;box-sizing:border-box;border:1px solid #333;background:#fff"></div>
<svg style="position:absolute;left:1047px;top:690.5px;" width="12" height="12" viewBox="0 0 12 12"><path d="M6.0 0.5 L11.5 3.25 V8.75 L6.0 11.5 L0.5 8.75 V3.25 Z M0.5 3.25 L6.0 6.0 L11.5 3.25 M6.0 6.0 V11.5" fill="none" stroke="#6e5c8c" stroke-width="0.85" stroke-linejoin="round"/></svg>
<svg style="position:absolute;left:1065.6px;top:704.8px;" width="15" height="30" viewBox="0 0 15 30"><path d="M1.1 4.8 C1.7 1.7 4.1 0.3 7 0.3 C10.6 0.3 13 2.7 13 6.3 C13 9.4 11.3 11 9.3 12.5 C7.4 13.9 6.4 15.2 6.4 18.2 V21" fill="none" stroke="#000" stroke-width="2.9"/><circle cx="6.4" cy="26.6" r="2.4" fill="#000"/></svg>
<div style="position:absolute;left:1122px;top:689px;width:55px;height:55px;box-sizing:border-box;border:1px solid #333;background:#fff"></div>
<svg style="position:absolute;left:1124px;top:690.5px;" width="12" height="12" viewBox="0 0 12 12"><path d="M6.0 0.5 L11.5 3.25 V8.75 L6.0 11.5 L0.5 8.75 V3.25 Z M0.5 3.25 L6.0 6.0 L11.5 3.25 M6.0 6.0 V11.5" fill="none" stroke="#6e5c8c" stroke-width="0.85" stroke-linejoin="round"/></svg>
<svg style="position:absolute;left:1142.6px;top:704.8px;" width="15" height="30" viewBox="0 0 15 30"><path d="M1.1 4.8 C1.7 1.7 4.1 0.3 7 0.3 C10.6 0.3 13 2.7 13 6.3 C13 9.4 11.3 11 9.3 12.5 C7.4 13.9 6.4 15.2 6.4 18.2 V21" fill="none" stroke="#000" stroke-width="2.9"/><circle cx="6.4" cy="26.6" r="2.4" fill="#000"/></svg>
<div class="t" style="left:763.5px;top:282.0px;font-size:49px;color:#000;font-weight:bold;font-style:italic;transform:scaleX(0.976);transform-origin:0 0">??????</div>
<svg style="position:absolute;left:766px;top:283px;" width="12" height="12" viewBox="0 0 12 12"><path d="M6.0 0.5 L11.5 3.25 V8.75 L6.0 11.5 L0.5 8.75 V3.25 Z M0.5 3.25 L6.0 6.0 L11.5 3.25 M6.0 6.0 V11.5" fill="none" stroke="#6e5c8c" stroke-width="0.85" stroke-linejoin="round"/></svg>
<svg style="position:absolute;left:491.5px;top:333.5px;" width="717" height="52" viewBox="0 0 717 52"><rect x="0.5" y="0.5" width="716" height="51" fill="none" stroke="#cccccc" stroke-width="1.8" stroke-dasharray="4 3"/></svg>
<svg style="position:absolute;left:495px;top:337px;" width="12" height="12" viewBox="0 0 12 12"><path d="M6.0 0.5 L11.5 3.25 V8.75 L6.0 11.5 L0.5 8.75 V3.25 Z M0.5 3.25 L6.0 6.0 L11.5 3.25 M6.0 6.0 V11.5" fill="none" stroke="#6e5c8c" stroke-width="0.85" stroke-linejoin="round"/></svg>
<div class="t" style="left:808.5px;top:337.7px;font-size:25px;color:#000;">??????</div>
<div class="t" style="left:493.5px;top:434.8px;font-size:34px;color:#000;transform:scaleX(0.935);transform-origin:0 0">??????</div>
<div class="t" style="left:493.5px;top:495.2px;font-size:34px;color:#000;transform:scaleX(0.935);transform-origin:0 0">??????</div>
<div class="t" style="left:493.5px;top:555.4px;font-size:34px;color:#000;transform:scaleX(0.935);transform-origin:0 0">??????</div>
<svg style="position:absolute;left:494px;top:496.5px;" width="13" height="13" viewBox="0 0 13 13"><path d="M6.5 0.5 L12.5 3.5 V9.5 L6.5 12.5 L0.5 9.5 V3.5 Z M0.5 3.5 L6.5 6.5 L12.5 3.5 M6.5 6.5 V12.5" fill="#fff" stroke="#5e4c7e" stroke-width="0.9" stroke-linejoin="round"/></svg>
<svg style="position:absolute;left:494px;top:436.5px;" width="13" height="13" viewBox="0 0 13 13"><path d="M6.5 0.5 L12.5 3.5 V9.5 L6.5 12.5 L0.5 9.5 V3.5 Z M0.5 3.5 L6.5 6.5 L12.5 3.5 M6.5 6.5 V12.5" fill="#fff" stroke="#5e4c7e" stroke-width="0.9" stroke-linejoin="round"/></svg>
<svg style="position:absolute;left:494px;top:557px;" width="13" height="13" viewBox="0 0 13 13"><path d="M6.5 0.5 L12.5 3.5 V9.5 L6.5 12.5 L0.5 9.5 V3.5 Z M0.5 3.5 L6.5 6.5 L12.5 3.5 M6.5 6.5 V12.5" fill="#fff" stroke="#5e4c7e" stroke-width="0.9" stroke-linejoin="round"/></svg>
<div class="t" style="left:999.5px;top:435.2px;font-size:34px;color:#000;transform:scaleX(0.973);transform-origin:0 0">11. 10. 2023</div>
<div class="t" style="left:999.5px;top:495.2px;font-size:34px;color:#000;transform:scaleX(0.973);transform-origin:0 0">11. 10. 2023</div>
<svg style="position:absolute;left:1000.5px;top:436px;" width="13" height="13" viewBox="0 0 13 13"><path d="M6.5 0.5 L12.5 3.5 V9.5 L6.5 12.5 L0.5 9.5 V3.5 Z M0.5 3.5 L6.5 6.5 L12.5 3.5 M6.5 6.5 V12.5" fill="#fff" stroke="#5e4c7e" stroke-width="0.9" stroke-linejoin="round"/></svg>
<svg style="position:absolute;left:1000.5px;top:496px;" width="13" height="13" viewBox="0 0 13 13"><path d="M6.5 0.5 L12.5 3.5 V9.5 L6.5 12.5 L0.5 9.5 V3.5 Z M0.5 3.5 L6.5 6.5 L12.5 3.5 M6.5 6.5 V12.5" fill="#fff" stroke="#5e4c7e" stroke-width="0.9" stroke-linejoin="round"/></svg>
<div class="t" style="left:999.5px;top:561.2px;font-size:21px;color:#000;transform:scaleX(0.955);transform-origin:0 0">??????</div>
<svg style="position:absolute;left:1002.5px;top:563.5px;" width="13" height="13" viewBox="0 0 13 13"><path d="M6.5 0.5 L12.5 3.5 V9.5 L6.5 12.5 L0.5 9.5 V3.5 Z M0.5 3.5 L6.5 6.5 L12.5 3.5 M6.5 6.5 V12.5" fill="#fff" stroke="#5e4c7e" stroke-width="0.9" stroke-linejoin="round"/></svg>
<div class="t" style="left:978.5px;top:549.2px;font-size:10px;color:#000;">3</div>
<div class="t" style="left:991.5px;top:549.2px;font-size:10px;color:#000;">5°C</div>
<svg style="position:absolute;left:982px;top:550px;" width="10" height="9" viewBox="0 0 10 9"><path d="M5 0.2999999999999998 L9.2 2.4 V6.6 L5 8.7 L0.7999999999999998 6.6 V2.4 Z M0.7999999999999998 2.4 L5 4.5 L9.2 2.4 M5 4.5 V8.7" fill="#fff" stroke="#6e5c8c" stroke-width="0.8" stroke-linejoin="round"/></svg>
<div class="t" style="left:916.5px;top:586.5px;font-size:10px;color:#000;">1</div>
<div class="t" style="left:927.0px;top:586.5px;font-size:10px;color:#000;">?</div>
<svg style="position:absolute;left:919px;top:586.5px;" width="10" height="9" viewBox="0 0 10 9"><path d="M5 0.2999999999999998 L9.2 2.4 V6.6 L5 8.7 L0.7999999999999998 6.6 V2.4 Z M0.7999999999999998 2.4 L5 4.5 L9.2 2.4 M5 4.5 V8.7" fill="#fff" stroke="#6e5c8c" stroke-width="0.8" stroke-linejoin="round"/></svg>
<div class="t" style="left:728.5px;top:601.1px;font-size:20px;color:#000;transform:scaleX(0.95);transform-origin:0 0">??????</div>
<svg style="position:absolute;left:728px;top:602px;" width="13" height="13" viewBox="0 0 13 13"><path d="M6.5 0.5 L12.5 3.5 V9.5 L6.5 12.5 L0.5 9.5 V3.5 Z M0.5 3.5 L6.5 6.5 L12.5 3.5 M6.5 6.5 V12.5" fill="#fff" stroke="#5e4c7e" stroke-width="0.9" stroke-linejoin="round"/></svg>
<div class="t" style="left:1122.5px;top:744.9px;font-size:20px;color:#000;transform:scaleX(0.975);transform-origin:0 0">??????</div>
<svg style="position:absolute;left:1123px;top:746px;" width="13" height="13" viewBox="0 0 13 13"><path d="M6.5 0.5 L12.5 3.5 V9.5 L6.5 12.5 L0.5 9.5 V3.5 Z M0.5 3.5 L6.5 6.5 L12.5 3.5 M6.5 6.5 V12.5" fill="#fff" stroke="#5e4c7e" stroke-width="0.9" stroke-linejoin="round"/></svg>
<svg style="position:absolute;left:426px;top:850px;" width="150" height="129" viewBox="0 0 150 129"><rect x="0.5" y="0.5" width="149" height="128" fill="none" stroke="#cccccc" stroke-width="1.8" stroke-dasharray="4 3"/></svg>
<svg style="position:absolute;left:580px;top:850px;" width="150" height="129" viewBox="0 0 150 129"><rect x="0.5" y="0.5" width="149" height="128" fill="none" stroke="#cccccc" stroke-width="1.8" stroke-dasharray="4 3"/></svg>
<svg style="position:absolute;left:0;top:0" width="1337" height="1032"><rect x="941.6" y="831" width="3.5" height="86.5" fill="#000"/><rect x="946.0" y="831" width="1.8" height="86.5" fill="#000"/><rect x="950.6" y="831" width="2.1" height="86.5" fill="#000"/><rect x="958.9" y="831" width="3.2" height="86.5" fill="#000"/><rect x="963.7" y="831" width="3.1" height="86.5" fill="#000"/><rect x="971.4" y="831" width="3.1" height="86.5" fill="#000"/><rect x="976.2" y="831" width="2.8" height="86.5" fill="#000"/><rect x="980.6" y="831" width="3.2" height="86.5" fill="#000"/><rect x="988.7" y="831" width="3.4" height="86.5" fill="#000"/><rect x="993.5" y="831" width="2.8" height="86.5" fill="#000"/><rect x="997.9" y="831" width="2.9" height="86.5" fill="#000"/><rect x="1006.0" y="831" width="3.0" height="86.5" fill="#000"/><rect x="1010.8" y="831" width="2.8" height="86.5" fill="#000"/><rect x="1015.2" y="831" width="2.8" height="86.5" fill="#000"/><rect x="1023.7" y="831" width="3.0" height="86.5" fill="#000"/><rect x="1028.4" y="831" width="2.9" height="86.5" fill="#000"/><rect x="1032.9" y="831" width="2.8" height="86.5" fill="#000"/><rect x="1041.0" y="831" width="3.0" height="86.5" fill="#000"/><rect x="1045.7" y="831" width="3.1" height="86.5" fill="#000"/><rect x="1050.2" y="831" width="2.8" height="86.5" fill="#000"/><rect x="1058.1" y="831" width="3.2" height="86.5" fill="#000"/><rect x="1062.4" y="831" width="1.7" height="86.5" fill="#000"/><rect x="1069.3" y="831" width="1.7" height="86.5" fill="#000"/><rect x="1072.0" y="831" width="3.1" height="86.5" fill="#000"/><rect x="1080.0" y="831" width="3.0" height="86.5" fill="#000"/><rect x="1088.0" y="831" width="4.4" height="86.5" fill="#000"/><rect x="1093.9" y="831" width="2.0" height="86.5" fill="#000"/><rect x="1097.3" y="831" width="3.2" height="86.5" fill="#000"/></svg>
<svg style="position:absolute;left:928px;top:833px;" width="12" height="12" viewBox="0 0 12 12"><path d="M6.0 0.5 L11.5 3.25 V8.75 L6.0 11.5 L0.5 8.75 V3.25 Z M0.5 3.25 L6.0 6.0 L11.5 3.25 M6.0 6.0 V11.5" fill="none" stroke="#6e5c8c" stroke-width="0.85" stroke-linejoin="round"/></svg>
<div class="t" style="left:996.0px;top:921.3px;font-size:15px;color:#000;">??????</div>
<svg style="position:absolute;left:997px;top:923px;" width="13" height="13" viewBox="0 0 13 13"><path d="M6.5 0.5 L12.5 3.5 V9.5 L6.5 12.5 L0.5 9.5 V3.5 Z M0.5 3.5 L6.5 6.5 L12.5 3.5 M6.5 6.5 V12.5" fill="#fff" stroke="#5e4c7e" stroke-width="0.9" stroke-linejoin="round"/></svg>
<div class="t" style="left:759.0px;top:952.3px;font-size:24px;color:#000;transform:scaleX(0.97);transform-origin:0 0">??????</div>
<svg style="position:absolute;left:762px;top:955px;" width="13" height="13" viewBox="0 0 13 13"><path d="M6.5 0.5 L12.5 3.5 V9.5 L6.5 12.5 L0.5 9.5 V3.5 Z M0.5 3.5 L6.5 6.5 L12.5 3.5 M6.5 6.5 V12.5" fill="#fff" stroke="#5e4c7e" stroke-width="0.9" stroke-linejoin="round"/></svg>
<div class="t" style="left:1015.5px;top:954.5px;font-size:24px;color:#000;transform:scaleX(0.945);transform-origin:0 0">??????</div>
<svg style="position:absolute;left:1017px;top:957px;" width="13" height="13" viewBox="0 0 13 13"><path d="M6.5 0.5 L12.5 3.5 V9.5 L6.5 12.5 L0.5 9.5 V3.5 Z M0.5 3.5 L6.5 6.5 L12.5 3.5 M6.5 6.5 V12.5" fill="#fff" stroke="#5e4c7e" stroke-width="0.9" stroke-linejoin="round"/></svg>
<div style="position:absolute;left:493px;top:413px;width:77px;height:20.5px;background:#1b74e4"></div>
<div class="t" style="left:495.5px;top:417.5px;font-size:12px;color:#fff;letter-spacing:-0.1px">Text_2 - lotNo</div>
<div style="position:absolute;left:579px;top:413px;width:21.5px;height:19.5px;background:#1b74e4"></div>
<div style="position:absolute;left:584px;top:417px;width:12px;height:1.6px;background:#fff"></div>
<div style="position:absolute;left:584px;top:422.2px;width:12px;height:1.6px;background:#fff"></div>
<div style="position:absolute;left:584px;top:427.5px;width:12px;height:1.6px;background:#fff"></div>
<div style="position:absolute;left:546.3px;top:408px;width:1px;height:26px;background:#6a7ad8"></div>
<div style="position:absolute;left:543px;top:404.8px;width:7px;height:7px;border-radius:50%;background:#5a5ad8"></div>
<svg style="position:absolute;left:492px;top:433px;" width="111" height="39" viewBox="0 0 111 39"><rect x="1.2" y="1.2" width="108.3" height="36.6" fill="none" stroke="#1b6fd8" stroke-width="1.5" stroke-dasharray="2.5 1"/></svg>
<div style="position:absolute;left:543.3px;top:430.3px;width:7px;height:7px;box-sizing:border-box;border:1px solid #111;background:#fff"></div>
<div style="position:absolute;left:543.3px;top:467.5px;width:7px;height:7px;box-sizing:border-box;border:1px solid #111;background:#fff"></div>
<div style="position:absolute;left:489.5px;top:449.0px;width:7px;height:7px;box-sizing:border-box;border:1px solid #111;background:#fff"></div>
<div style="position:absolute;left:597.8px;top:449.0px;width:7px;height:7px;box-sizing:border-box;border:1px solid #111;background:#fff"></div>
<div style="position:absolute;left:488.4px;top:429.2px;width:9.2px;height:9.2px;box-sizing:border-box;border-radius:50%;border:1px solid #222;background:#2b7de0"></div>
<div style="position:absolute;left:596.7px;top:429.2px;width:9.2px;height:9.2px;box-sizing:border-box;border-radius:50%;border:1px solid #222;background:#fff"></div>
<div style="position:absolute;left:488.4px;top:466.4px;width:9.2px;height:9.2px;box-sizing:border-box;border-radius:50%;border:1px solid #222;background:#fff"></div>
<div style="position:absolute;left:596.7px;top:466.4px;width:9.2px;height:9.2px;box-sizing:border-box;border-radius:50%;border:1px solid #222;background:#fff"></div>
<svg style="position:absolute;left:0;top:0" width="1337" height="1032">
<path d="M263 706.2 L296 702 L293 711.8 L468.5 769.5 L428 769.5 L289.3 721 L286.5 729.6 Z" fill="#ef8660"/>
</svg>
<div style="position:absolute;left:421px;top:769px;width:401px;height:127px;background:#ef8660;border-radius:6px"></div>
<div class="t" style="left:466.0px;top:816.5px;font-size:33px;color:#fdf4ee;letter-spacing:0px">List of label variables</div>
</div></body></html>
